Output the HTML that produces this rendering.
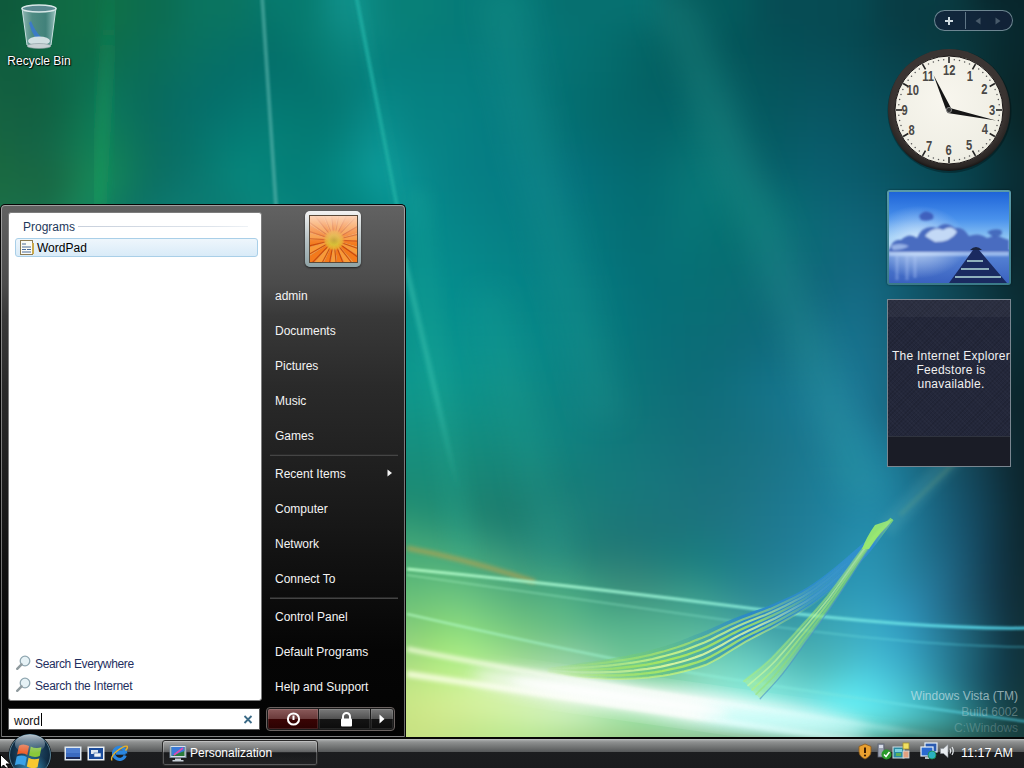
<!DOCTYPE html>
<html><head><meta charset="utf-8">
<style>
*{margin:0;padding:0;box-sizing:border-box}
html,body{width:1024px;height:768px;overflow:hidden;background:#0b6f6a;font-family:"Liberation Sans",sans-serif}
.abs{position:absolute}
#wallwrap{position:absolute;left:0;top:0;width:1024px;height:768px;overflow:hidden}
</style></head><body>
<div id="wallwrap"><div id="field" style="position:absolute;left:-48px;top:-48px;width:1120px;filter:blur(14px)"><div style="height:12px;background:linear-gradient(90deg,#0e5a3c 0px,#0e5a3c 24px,#0e5a3c 48px,#0e5a3c 72px,#106a44 96px,#106a44 120px,#0f7048 144px,#0f7048 168px,#0c6c50 192px,#0c6c50 216px,#0a7460 240px,#0a7460 264px,#0a7460 288px,#067a6e 312px,#067a6e 336px,#067a6e 360px,#10908a 384px,#10908a 408px,#088078 432px,#088078 456px,#088078 480px,#067a78 504px,#067a78 528px,#067a78 552px,#067a78 576px,#067070 600px,#067070 624px,#067070 648px,#067070 672px,#067070 696px,#045a5c 720px,#045a5c 744px,#045a5c 768px,#045a5c 792px,#064c54 816px,#064c54 840px,#064c54 864px,#064a52 888px,#064a52 912px,#083c44 936px,#083c44 960px,#083c44 984px,#0a3a40 1008px,#08262c 1032px,#08262c 1056px,#08262c 1080px,#08262c 1104px)"></div><div style="height:12px;background:linear-gradient(90deg,#0e5a3c 0px,#0e5a3c 24px,#0e5a3c 48px,#0e5a3c 72px,#106a44 96px,#106a44 120px,#0f7048 144px,#0f7048 168px,#0c6c50 192px,#0c6c50 216px,#0a7460 240px,#0a7460 264px,#0a7460 288px,#067a6e 312px,#067a6e 336px,#067a6e 360px,#10908a 384px,#10908a 408px,#088078 432px,#088078 456px,#088078 480px,#067a78 504px,#067a78 528px,#067a78 552px,#067a78 576px,#067070 600px,#067070 624px,#067070 648px,#067070 672px,#067070 696px,#045a5c 720px,#045a5c 744px,#045a5c 768px,#045a5c 792px,#064c54 816px,#064c54 840px,#064c54 864px,#064a52 888px,#064a52 912px,#083c44 936px,#083c44 960px,#083c44 984px,#0a3a40 1008px,#08262c 1032px,#08262c 1056px,#08262c 1080px,#08262c 1104px)"></div><div style="height:12px;background:linear-gradient(90deg,#0e5a3c 0px,#0e5a3c 24px,#0e5a3c 48px,#0e5a3c 72px,#106a44 96px,#106a44 120px,#0f7048 144px,#0f7048 168px,#0c6c50 192px,#0c6c50 216px,#0a7460 240px,#0a7460 264px,#0a7460 288px,#067a6e 312px,#067a6e 336px,#067a6e 360px,#10908a 384px,#10908a 408px,#088078 432px,#088078 456px,#088078 480px,#067a78 504px,#067a78 528px,#067a78 552px,#067a78 576px,#067070 600px,#067070 624px,#067070 648px,#067070 672px,#067070 696px,#045a5c 720px,#045a5c 744px,#045a5c 768px,#045a5c 792px,#064c54 816px,#064c54 840px,#064c54 864px,#064a52 888px,#064a52 912px,#083c44 936px,#083c44 960px,#083c44 984px,#0a3a40 1008px,#08262c 1032px,#08262c 1056px,#08262c 1080px,#08262c 1104px)"></div><div style="height:12px;background:linear-gradient(90deg,#0e5a3c 0px,#0e5a3c 24px,#0e5a3c 48px,#0e5a3c 72px,#106a44 96px,#106a44 120px,#0f7048 144px,#0f7048 168px,#0c6c50 192px,#0c6c50 216px,#0a7460 240px,#0a7460 264px,#0a7460 288px,#067a6e 312px,#067a6e 336px,#067a6e 360px,#10908a 384px,#10908a 408px,#088078 432px,#088078 456px,#088078 480px,#067a78 504px,#067a78 528px,#067a78 552px,#067a78 576px,#067070 600px,#067070 624px,#067070 648px,#067070 672px,#067070 696px,#045a5c 720px,#045a5c 744px,#045a5c 768px,#045a5c 792px,#064c54 816px,#064c54 840px,#064c54 864px,#064a52 888px,#064a52 912px,#083c44 936px,#083c44 960px,#083c44 984px,#0a3a40 1008px,#08262c 1032px,#08262c 1056px,#08262c 1080px,#08262c 1104px)"></div><div style="height:12px;background:linear-gradient(90deg,#0e5a3c 0px,#0e5a3c 24px,#0e5a3c 48px,#0e5a3c 72px,#106a44 96px,#106a44 120px,#0f7048 144px,#0f7048 168px,#0c6c50 192px,#0c6c50 216px,#0a7460 240px,#0a7460 264px,#0a7460 288px,#067a6e 312px,#067a6e 336px,#067a6e 360px,#10908a 384px,#10908a 408px,#088078 432px,#088078 456px,#088078 480px,#067a78 504px,#067a78 528px,#067a78 552px,#067a78 576px,#067070 600px,#067070 624px,#067070 648px,#067070 672px,#067070 696px,#045a5c 720px,#045a5c 744px,#045a5c 768px,#045a5c 792px,#064c54 816px,#064c54 840px,#064c54 864px,#064a52 888px,#064a52 912px,#083c44 936px,#083c44 960px,#083c44 984px,#0a3a40 1008px,#08262c 1032px,#08262c 1056px,#08262c 1080px,#08262c 1104px)"></div><div style="height:12px;background:linear-gradient(90deg,#0e5a3c 0px,#0e5a3c 24px,#0e5a3c 48px,#0e5a3c 72px,#106a44 96px,#106a44 120px,#0f7048 144px,#0f7048 168px,#0c6c50 192px,#0c6c50 216px,#0a7460 240px,#0a7460 264px,#0a7460 288px,#046e6a 312px,#067a6e 336px,#067a6e 360px,#10908a 384px,#10908a 408px,#088078 432px,#088078 456px,#088078 480px,#067a78 504px,#067a78 528px,#067a78 552px,#067a7c 576px,#067070 600px,#067070 624px,#067070 648px,#067070 672px,#067070 696px,#045a5c 720px,#045a5c 744px,#045a5c 768px,#045a5c 792px,#064c54 816px,#064c54 840px,#064c54 864px,#064a52 888px,#064a52 912px,#083c44 936px,#083c44 960px,#0a3a40 984px,#0a3a40 1008px,#0a3a40 1032px,#08262c 1056px,#08262c 1080px,#08262c 1104px)"></div><div style="height:12px;background:linear-gradient(90deg,#0e5a3c 0px,#0e5a3c 24px,#0e5a3c 48px,#0f613f 72px,#106843 96px,#0f6c46 120px,#0f6e47 144px,#0e6f4b 168px,#0c6c50 192px,#0b6e56 216px,#0a725e 240px,#087262 264px,#077465 288px,#067569 312px,#05776c 336px,#077d72 360px,#0b867e 384px,#0f8e88 408px,#0a857e 432px,#077f78 456px,#067d78 480px,#067b78 504px,#067a78 528px,#067877 552px,#067675 576px,#067474 600px,#067272 624px,#056f6f 648px,#056a6b 672px,#056667 696px,#056163 720px,#055d60 744px,#05595d 768px,#055459 792px,#055056 816px,#054d55 840px,#064b54 864px,#064a52 888px,#06464e 912px,#073f48 936px,#083b43 960px,#08383f 984px,#08343a 1008px,#082f35 1032px,#08292f 1056px,#08262c 1080px,#08262c 1104px)"></div><div style="height:12px;background:linear-gradient(90deg,#0f5b3d 0px,#0f5b3d 24px,#0f5b3d 48px,#0f5f3f 72px,#106743 96px,#0e6b47 120px,#0e6d49 144px,#0d6f4e 168px,#0b6d53 192px,#0a6e58 216px,#097260 240px,#087163 264px,#067066 288px,#057069 312px,#04746c 336px,#067b71 360px,#0a847c 384px,#0c8984 408px,#08827d 432px,#067e7a 456px,#067c7a 480px,#067b7a 504px,#067a7a 528px,#06797a 552px,#067778 576px,#057475 600px,#057172 624px,#056e6f 648px,#05696a 672px,#046465 696px,#045f61 720px,#045a5c 744px,#04575a 768px,#045459 792px,#055157 816px,#054e56 840px,#064d56 864px,#064c54 888px,#064850 912px,#07414a 936px,#083e46 960px,#093c43 984px,#093a40 1008px,#093137 1032px,#08292e 1056px,#08262c 1080px,#08262c 1104px)"></div><div style="height:12px;background:linear-gradient(90deg,#105c3e 0px,#105c3e 24px,#105c3e 48px,#0f5e3e 72px,#106643 96px,#0e6b49 120px,#0d6d4a 144px,#0c7051 168px,#0b6c54 192px,#0a6e5a 216px,#097161 240px,#077065 264px,#056f67 288px,#046e69 312px,#04726c 336px,#05796f 360px,#09827a 384px,#0a8580 408px,#067f7c 432px,#067e7c 456px,#067d7c 480px,#067c7c 504px,#067b7c 528px,#05797b 552px,#057678 576px,#057375 600px,#057071 624px,#056e6e 648px,#04696a 672px,#046465 696px,#045f60 720px,#045c5e 744px,#04585c 768px,#04555a 792px,#055259 816px,#054f57 840px,#064f58 864px,#064d57 888px,#074953 912px,#08434c 936px,#084049 960px,#093e46 984px,#093b41 1008px,#093136 1032px,#08282d 1056px,#08262c 1080px,#08262c 1104px)"></div><div style="height:12px;background:linear-gradient(90deg,#115e3f 0px,#115e3f 24px,#115e3f 48px,#105d3e 72px,#106542 96px,#0d6a4a 120px,#0d6e4c 144px,#0c7054 168px,#0a6c56 192px,#096d5c 216px,#087063 240px,#066f66 264px,#056e69 288px,#04706b 312px,#04706b 336px,#04776e 360px,#087f79 384px,#07817c 408px,#06807e 432px,#067f7e 456px,#067e7e 480px,#067d7e 504px,#067c7d 528px,#057a7c 552px,#057577 576px,#057274 600px,#057071 624px,#056d6e 648px,#046869 672px,#046364 696px,#045e60 720px,#045e60 744px,#045a5d 768px,#05575c 792px,#05545a 816px,#065159 840px,#07505b 864px,#074f59 888px,#074b55 912px,#08454f 936px,#09424b 960px,#094048 984px,#093c43 1008px,#093034 1032px,#09282c 1056px,#08262c 1080px,#08262c 1104px)"></div><div style="height:12px;background:linear-gradient(90deg,#125f3f 0px,#125f3f 24px,#125f3f 48px,#105c3e 72px,#106342 96px,#0d6a4c 120px,#0d724f 144px,#0b7157 168px,#0a6b57 192px,#096d5e 216px,#076f64 240px,#066f68 264px,#046f6a 288px,#04736e 312px,#04726d 336px,#04756e 360px,#077d77 384px,#057c79 408px,#068281 432px,#06807f 456px,#067f7f 480px,#067e7f 504px,#067d7f 528px,#057a7d 552px,#057578 576px,#057274 600px,#056f70 624px,#046c6d 648px,#046769 672px,#046264 696px,#045f62 720px,#056163 744px,#045b5f 768px,#05585d 792px,#05555c 816px,#06535b 840px,#07525d 864px,#07515b 888px,#074d58 912px,#084651 936px,#09444e 960px,#09424b 984px,#093d44 1008px,#093136 1032px,#09272b 1056px,#0a2426 1080px,#0a2426 1104px)"></div><div style="height:12px;background:linear-gradient(90deg,#136040 0px,#136040 24px,#136040 48px,#115e3f 72px,#106242 96px,#0d694c 120px,#0e7552 144px,#0b735a 168px,#0a6b58 192px,#086c60 216px,#076e66 240px,#056e69 264px,#05716c 288px,#047670 312px,#04746f 336px,#04736e 360px,#067b75 384px,#067e7b 408px,#078685 432px,#068180 456px,#068080 480px,#067f80 504px,#067d7f 528px,#057b7f 552px,#057679 576px,#047174 600px,#046e70 624px,#046b6d 648px,#046668 672px,#046265 696px,#046063 720px,#056365 744px,#045d61 768px,#05595f 792px,#05565d 816px,#06545d 840px,#07545f 864px,#07525e 888px,#074f5a 912px,#084854 936px,#094751 960px,#09434c 984px,#093d45 1008px,#093238 1032px,#09272a 1056px,#0a2426 1080px,#0a2426 1104px)"></div><div style="height:12px;background:linear-gradient(90deg,#146141 0px,#146141 24px,#146141 48px,#125f40 72px,#106142 96px,#0d694b 120px,#0e7955 144px,#0b755d 168px,#0a6a59 192px,#076c62 216px,#066d67 240px,#05706b 264px,#05746e 288px,#047872 312px,#047771 336px,#04756f 360px,#047772 384px,#06817e 408px,#098a89 432px,#068282 456px,#068182 480px,#068081 504px,#067d80 528px,#067b80 552px,#05777a 576px,#047275 600px,#046d6f 624px,#046b6c 648px,#046668 672px,#046366 696px,#046165 720px,#056667 744px,#056064 768px,#055a60 792px,#05575e 816px,#06565f 840px,#085562 864px,#075460 888px,#08505c 912px,#094b57 936px,#094954 960px,#09444e 984px,#093e47 1008px,#09343a 1032px,#092729 1056px,#0a2426 1080px,#0a2426 1104px)"></div><div style="height:12px;background:linear-gradient(90deg,#156341 0px,#156341 24px,#156341 48px,#136041 72px,#116243 96px,#0e6d4b 120px,#0f7c56 144px,#0b755e 168px,#0a6b5a 192px,#086c63 216px,#066e68 240px,#05726d 264px,#057771 288px,#057b74 312px,#047972 336px,#047871 360px,#057974 384px,#078481 408px,#0a8d8c 432px,#068383 456px,#068283 480px,#078183 504px,#067d81 528px,#067c80 552px,#05777c 576px,#057376 600px,#046e70 624px,#046a6c 648px,#046769 672px,#046468 696px,#046367 720px,#06696a 744px,#066466 768px,#055b61 792px,#055860 816px,#075761 840px,#085764 864px,#085562 888px,#08525f 912px,#094d59 936px,#094b56 960px,#09454f 984px,#093f48 1008px,#09363c 1032px,#09282b 1056px,#0a2426 1080px,#0a2426 1104px)"></div><div style="height:12px;background:linear-gradient(90deg,#166441 0px,#166441 24px,#166441 48px,#146143 72px,#126344 96px,#10704d 120px,#0f7e57 144px,#0d785b 168px,#0b6d5b 192px,#096d63 216px,#067068 240px,#067570 264px,#057973 288px,#057d76 312px,#047c74 336px,#047a73 360px,#047c77 384px,#088784 408px,#0b9190 432px,#078484 456px,#078384 480px,#078184 504px,#067d81 528px,#067c81 552px,#05787d 576px,#057377 600px,#046e72 624px,#046a6d 648px,#04686b 672px,#046569 696px,#046669 720px,#066b6c 744px,#066769 768px,#055d63 792px,#055a61 816px,#075963 840px,#085966 864px,#085764 888px,#085461 912px,#094f5c 936px,#094c58 960px,#094651 984px,#08404a 1008px,#08373e 1032px,#092a2e 1056px,#0a2426 1080px,#0a2426 1104px)"></div><div style="height:12px;background:linear-gradient(90deg,#176541 0px,#176541 24px,#176541 48px,#156344 72px,#136446 96px,#11724e 120px,#107f57 144px,#0f7b5a 168px,#0b6e5c 192px,#096d64 216px,#067168 240px,#067972 264px,#057c75 288px,#058077 312px,#057e76 336px,#047872 360px,#047f79 384px,#098a88 408px,#0c9594 432px,#078586 456px,#078485 480px,#068184 504px,#067d82 528px,#067c82 552px,#05787e 576px,#057478 600px,#046f73 624px,#046b6f 648px,#04686c 672px,#04666b 696px,#05696c 720px,#076e6e 744px,#076b6c 768px,#055e64 792px,#055b63 816px,#075b66 840px,#095b69 864px,#085866 888px,#085663 912px,#09515f 936px,#094d59 960px,#094752 984px,#08414b 1008px,#083940 1032px,#092b30 1056px,#0a2426 1080px,#0a2426 1104px)"></div><div style="height:12px;background:linear-gradient(90deg,#186740 0px,#186740 24px,#186740 48px,#166444 72px,#146647 96px,#137550 120px,#128358 144px,#107d5a 168px,#0c6f5c 192px,#0a6e64 216px,#077268 240px,#067a72 264px,#057f77 288px,#058279 312px,#057f77 336px,#047b75 360px,#04827c 384px,#0a8d8b 408px,#0d9898 432px,#088889 456px,#078587 480px,#068185 504px,#067d82 528px,#067d83 552px,#05797f 576px,#05747a 600px,#056f77 624px,#046c72 648px,#04696e 672px,#04676c 696px,#056b6e 720px,#077171 744px,#086e6f 768px,#066167 792px,#065c64 816px,#075c68 840px,#095c6b 864px,#095a69 888px,#095766 912px,#095361 936px,#094e5a 960px,#094853 984px,#08424c 1008px,#083a42 1032px,#092d32 1056px,#0a2a30 1080px,#0a2a30 1104px)"></div><div style="height:12px;background:linear-gradient(90deg,#196840 0px,#196840 24px,#196840 48px,#176543 72px,#166848 96px,#16754f 120px,#148658 144px,#117f59 168px,#0c705d 192px,#0b6e65 216px,#08736a 240px,#077c72 264px,#06837a 288px,#05847b 312px,#047e77 336px,#047e78 360px,#04857f 384px,#09908d 408px,#0e9c9b 432px,#098c8d 456px,#078588 480px,#068185 504px,#067d83 528px,#067d84 552px,#057a80 576px,#05757d 600px,#057079 624px,#046d75 648px,#046a70 672px,#04686e 696px,#066e70 720px,#087373 744px,#087172 768px,#06646a 792px,#065e66 816px,#075e6a 840px,#095e6d 864px,#095b6b 888px,#095968 912px,#095463 936px,#094f5c 960px,#084955 984px,#08434e 1008px,#083c44 1032px,#092e35 1056px,#0a2a30 1080px,#0a2a30 1104px)"></div><div style="height:12px;background:linear-gradient(90deg,#196940 0px,#196940 24px,#196940 48px,#196943 72px,#186541 96px,#19734b 120px,#168b59 144px,#12825a 168px,#0d725e 192px,#0b6f65 216px,#0a756d 240px,#097e75 264px,#07877d 288px,#05857c 312px,#047c76 336px,#04817b 360px,#048882 384px,#099390 408px,#0f9f9f 432px,#0a8f91 456px,#078588 480px,#068186 504px,#067d83 528px,#067d85 552px,#057a83 576px,#057580 600px,#05717c 624px,#046e77 648px,#046b72 672px,#046b70 696px,#067073 720px,#087676 744px,#097575 768px,#07686d 792px,#065f68 816px,#085f6c 840px,#095f6f 864px,#095d6d 888px,#095a6a 912px,#095564 936px,#094f5d 960px,#084a56 984px,#08444f 1008px,#083d47 1032px,#093037 1056px,#0a2a30 1080px,#0a2a30 1104px)"></div><div style="height:12px;background:linear-gradient(90deg,#1a6b42 0px,#1a6b42 24px,#1a6b42 48px,#196b46 72px,#186642 96px,#19774e 120px,#168f5c 144px,#127f5b 168px,#0c6f61 192px,#0c7168 216px,#0a7870 240px,#0a7b73 264px,#08857b 288px,#06847c 312px,#047f79 336px,#04807b 360px,#048681 384px,#068e8a 408px,#0c9a99 432px,#0a9192 456px,#078689 480px,#068286 504px,#067f84 528px,#067d84 552px,#067b84 576px,#067681 600px,#05737d 624px,#057078 648px,#046d73 672px,#046c71 696px,#067174 720px,#087676 744px,#087776 768px,#076b6e 792px,#06656c 816px,#08656f 840px,#0a6271 864px,#0b5f70 888px,#0b5c6d 912px,#0a5767 936px,#0a5160 960px,#094c59 984px,#094652 1008px,#083b45 1032px,#092e36 1056px,#0a2a30 1080px,#0a2a30 1104px)"></div><div style="height:12px;background:linear-gradient(90deg,#1a6d44 0px,#1a6d44 24px,#1a6d44 48px,#196c48 72px,#186845 96px,#197b53 120px,#158b5d 144px,#107b5e 168px,#0d7164 192px,#0c766c 216px,#0b7a70 240px,#0a7b72 264px,#098178 288px,#08887f 312px,#06827b 336px,#047d7a 360px,#04837f 384px,#048a85 408px,#099493 432px,#0a9292 456px,#06878a 480px,#068387 504px,#068085 528px,#057d83 552px,#067d84 576px,#067881 600px,#05747d 624px,#057178 648px,#046e74 672px,#046c72 696px,#067174 720px,#087777 744px,#087575 768px,#066f70 792px,#066a6f 816px,#086771 840px,#0a6472 864px,#0c6173 888px,#0c5e70 912px,#0c596a 936px,#0b5363 960px,#0b4e5c 984px,#0a4551 1008px,#093943 1032px,#0a2c34 1056px,#0a2a30 1080px,#0a2a30 1104px)"></div><div style="height:12px;background:linear-gradient(90deg,#1a6e47 0px,#1a6e47 24px,#1a6e47 48px,#196e4a 72px,#186b48 96px,#198157 120px,#14875e 144px,#0f7760 168px,#0e7368 192px,#0c7a6f 216px,#0b7b71 240px,#0b7c73 264px,#0a7e76 288px,#09887e 312px,#07867e 336px,#057f7a 360px,#04817e 384px,#048784 408px,#068f8c 432px,#099393 456px,#06888a 480px,#068488 504px,#068186 528px,#067e84 552px,#067d83 576px,#067981 600px,#05757d 624px,#057278 648px,#046e75 672px,#046c72 696px,#067275 720px,#087777 744px,#077474 768px,#067070 792px,#076d71 816px,#096a72 840px,#0b6674 864px,#0d6376 888px,#0d6074 912px,#0d5b6e 936px,#0c5567 960px,#0c4e5d 984px,#0b424f 1008px,#0a3741 1032px,#0a2a32 1056px,#0a2a30 1080px,#0a2a30 1104px)"></div><div style="height:12px;background:linear-gradient(90deg,#1a704a 0px,#1a704a 24px,#1a704a 48px,#196f4c 72px,#186f4c 96px,#18865b 120px,#14835e 144px,#0e7363 168px,#0e776b 192px,#0d7c70 216px,#0c7d72 240px,#0b7e74 264px,#0b7f76 288px,#0a857c 312px,#088a81 336px,#06837d 360px,#05827e 384px,#058583 408px,#058a88 432px,#099394 456px,#06898b 480px,#068588 504px,#068286 528px,#067f84 552px,#067c82 576px,#067a82 600px,#05777e 624px,#057379 648px,#046f75 672px,#056d73 696px,#077275 720px,#087577 744px,#067273 768px,#066f70 792px,#086e72 816px,#0a6c74 840px,#0c6876 864px,#0e6577 888px,#0f6277 912px,#0e5d71 936px,#0e576a 960px,#0d4b5b 984px,#0c404d 1008px,#0b343f 1032px,#0a2830 1056px,#0c2028 1080px,#0c2028 1104px)"></div><div style="height:12px;background:linear-gradient(90deg,#1a724c 0px,#1a724c 24px,#1a724c 48px,#19714e 72px,#197451 96px,#178c60 120px,#137f60 144px,#0f7667 168px,#0e7b6e 192px,#0d7d71 216px,#0d7e73 240px,#0c7f75 264px,#0b8077 288px,#0b8279 312px,#098b81 336px,#078780 360px,#06837f 384px,#058683 408px,#058887 432px,#068f8f 456px,#068a8b 480px,#068789 504px,#068387 528px,#068185 552px,#067e83 576px,#067b82 600px,#05787e 624px,#05747a 648px,#057076 672px,#056d73 696px,#077276 720px,#077476 744px,#067072 768px,#076f71 792px,#096d73 816px,#0a6c75 840px,#0c6a77 864px,#0e6779 888px,#10647a 912px,#0f5f74 936px,#0f5467 960px,#0e4959 984px,#0d3d4b 1008px,#0c323d 1032px,#0b262e 1056px,#09292f 1080px,#09292f 1104px)"></div><div style="height:12px;background:linear-gradient(90deg,#1a744f 0px,#1a744f 24px,#1a744f 48px,#197250 72px,#197955 96px,#168b62 120px,#127b63 144px,#10786a 168px,#0e7d70 192px,#0e7f72 216px,#0d8074 240px,#0c8176 264px,#0c8278 288px,#0b837a 312px,#0a887f 336px,#098b82 360px,#06847f 384px,#068783 408px,#068987 432px,#058c8b 456px,#068b8c 480px,#06888a 504px,#068588 528px,#068286 552px,#067f84 576px,#067c82 600px,#05797f 624px,#05747b 648px,#057077 672px,#056d74 696px,#077377 720px,#067275 744px,#066f72 768px,#086e72 792px,#096d74 816px,#0b6b76 840px,#0d6978 864px,#0f687a 888px,#11667d 912px,#105e74 936px,#0f5265 960px,#0e4657 984px,#0d3b49 1008px,#0c2f3b 1032px,#0b242c 1056px,#09292f 1080px,#09292f 1104px)"></div><div style="height:12px;background:linear-gradient(90deg,#1a7551 0px,#1a7551 24px,#1a7551 48px,#197453 72px,#197d5a 96px,#168862 120px,#117866 144px,#107c6e 168px,#0f7f71 192px,#0e8073 216px,#0e8175 240px,#0d8277 264px,#0c8379 288px,#0c847a 312px,#0b857c 336px,#0a8e84 360px,#088881 384px,#078883 408px,#078b87 432px,#068d8c 456px,#068c8d 480px,#06898b 504px,#068689 528px,#068387 552px,#068085 576px,#067d83 600px,#057980 624px,#05757c 648px,#057178 672px,#056e75 696px,#077377 720px,#067074 744px,#076f73 768px,#086e73 792px,#0a6c75 816px,#0c6b77 840px,#0e6979 864px,#10677b 888px,#12667e 912px,#115f75 936px,#105467 960px,#0f4858 984px,#0e3c4a 1008px,#0d313c 1032px,#0c252e 1056px,#09292f 1080px,#09292f 1104px)"></div><div style="height:12px;background:linear-gradient(90deg,#1a7754 0px,#1a7754 24px,#1a7754 48px,#197555 72px,#19825e 96px,#158463 120px,#117a69 144px,#107f70 168px,#108072 192px,#0f8174 216px,#0e8276 240px,#0e8377 264px,#0d8579 288px,#0c867b 312px,#0c877d 336px,#0b8b82 360px,#098c84 384px,#088983 408px,#078c87 432px,#078e8c 456px,#058e8e 480px,#068a8b 504px,#068789 528px,#068487 552px,#068185 576px,#067e83 600px,#067a80 624px,#05767d 648px,#057279 672px,#056e75 696px,#067277 720px,#066f74 744px,#086e73 768px,#096d73 792px,#0b6c76 816px,#0d6a78 840px,#0f687a 864px,#11677c 888px,#136881 912px,#116076 936px,#105669 960px,#0e4b5c 984px,#0d404d 1008px,#0c343f 1032px,#0b2931 1056px,#0a292f 1080px,#0a292f 1104px)"></div><div style="height:12px;background:linear-gradient(90deg,#1a7956 0px,#1a7956 24px,#1a7956 48px,#197757 72px,#188862 96px,#148066 120px,#127d6d 144px,#118171 168px,#108273 192px,#0f8375 216px,#0f8476 240px,#0e8578 264px,#0e867a 288px,#0d877c 312px,#0c887e 336px,#0c8980 360px,#0a9087 384px,#088a83 408px,#088d88 432px,#088f8c 456px,#068f8e 480px,#068b8c 504px,#06888a 528px,#068588 552px,#068286 576px,#078084 600px,#067b80 624px,#06777d 648px,#05727a 672px,#056e76 696px,#067076 720px,#076f74 744px,#086e73 768px,#0a6d74 792px,#0c6b76 816px,#0e6979 840px,#10687b 864px,#12687e 888px,#146a83 912px,#126178 936px,#11576b 960px,#0f4d5d 984px,#0d4350 1008px,#0c3842 1032px,#0b2c34 1056px,#0a292f 1080px,#0a292f 1104px)"></div><div style="height:12px;background:linear-gradient(90deg,#1a7a59 0px,#1a7a59 24px,#1a7a59 48px,#197859 72px,#178c66 96px,#137c68 120px,#128170 144px,#118272 168px,#118373 192px,#108475 216px,#0f8577 240px,#0f8679 264px,#0e877b 288px,#0d887d 312px,#0d897f 336px,#0c8b81 360px,#0b8f85 384px,#0a8e86 408px,#098e88 432px,#08908c 456px,#07908e 480px,#068c8d 504px,#06898b 528px,#068688 552px,#078486 576px,#078184 600px,#077c81 624px,#06787e 648px,#06737a 672px,#056f77 696px,#066f76 720px,#076f75 744px,#096e74 768px,#0b6c75 792px,#0d6b77 816px,#0f697a 840px,#10687c 864px,#136a81 888px,#156c86 912px,#136279 936px,#11586c 960px,#104e5f 984px,#0e4452 1008px,#0c3a45 1032px,#0a3037 1056px,#0a282f 1080px,#0a282f 1104px)"></div><div style="height:12px;background:linear-gradient(90deg,#1a7c5b 0px,#1a7c5b 24px,#1a7c5b 48px,#197b5c 72px,#178867 96px,#147f6c 120px,#128370 144px,#128472 168px,#118574 192px,#118676 216px,#108778 240px,#0f887a 264px,#0f897c 288px,#0e8a7e 312px,#0d8b80 336px,#0d8c82 360px,#0c8d84 384px,#0b9288 408px,#098f88 432px,#09918c 456px,#08918e 480px,#068d8d 504px,#068a8b 528px,#078889 552px,#078587 576px,#088284 600px,#077d81 624px,#07797e 648px,#06747b 672px,#057078 696px,#076f76 720px,#086e75 744px,#0a6d74 768px,#0c6c76 792px,#0e6a78 816px,#0f687a 840px,#116a7f 864px,#146c84 888px,#166d88 912px,#14637b 936px,#12596e 960px,#104f61 984px,#0f4553 1008px,#0d3b46 1032px,#0b3139 1056px,#0a292f 1080px,#0a292f 1104px)"></div><div style="height:12px;background:linear-gradient(90deg,#1a7e5e 0px,#1a7e5e 24px,#1a7e5e 48px,#197f61 72px,#168468 96px,#14836f 120px,#138471 144px,#128573 168px,#128675 192px,#118777 216px,#118879 240px,#10897b 264px,#0f8a7d 288px,#0f8b7f 312px,#0e8c81 336px,#0d8d83 360px,#0d8e84 384px,#0c9288 408px,#0a9088 432px,#0a938c 456px,#08928e 480px,#078f8d 504px,#078c8c 528px,#078989 552px,#088687 576px,#088385 600px,#087e82 624px,#077a7e 648px,#06757b 672px,#067078 696px,#086f77 720px,#096e76 744px,#0b6d75 768px,#0d6b77 792px,#0e6a79 816px,#106a7d 840px,#136c82 864px,#156e87 888px,#166f8a 912px,#15657d 936px,#135a6f 960px,#115062 984px,#0f4655 1008px,#0e3c48 1032px,#0b3038 1056px,#0a282e 1080px,#0a282e 1104px)"></div><div style="height:12px;background:linear-gradient(90deg,#1a8061 0px,#1a8061 24px,#1a8061 48px,#198465 72px,#15816b 96px,#148470 120px,#148572 144px,#138674 168px,#128776 192px,#128978 216px,#118a7a 240px,#108b7c 264px,#108c7e 288px,#0f8d80 312px,#0f8e81 336px,#0e8f83 360px,#0d9085 384px,#0d9187 408px,#0b938a 432px,#0b948d 456px,#09938e 480px,#08908d 504px,#088d8c 528px,#088a8a 552px,#088788 576px,#098485 600px,#087f82 624px,#077a7f 648px,#07757b 672px,#077078 696px,#086e77 720px,#0a6d76 744px,#0c6c76 768px,#0d6b78 792px,#0f697a 816px,#116c7f 840px,#146e84 864px,#167089 888px,#17708b 912px,#15667e 936px,#145c71 960px,#125164 984px,#104757 1008px,#0e3c48 1032px,#0b2e37 1056px,#0a282e 1080px,#0a282e 1104px)"></div><div style="height:12px;background:linear-gradient(90deg,#1a8163 0px,#1a8163 24px,#1a8163 48px,#198969 72px,#16846e 96px,#158671 120px,#148773 144px,#148875 168px,#138977 192px,#128a79 216px,#128b7b 240px,#118c7d 264px,#108d7e 288px,#108e80 312px,#0f8f82 336px,#0f9084 360px,#0e9186 384px,#0d9288 408px,#0d958b 432px,#0b958d 456px,#0a948f 480px,#0a918d 504px,#098e8c 528px,#098b8a 552px,#098888 576px,#098586 600px,#098082 624px,#097b7e 648px,#08757b 672px,#097178 696px,#096e78 720px,#0b6d76 744px,#0c6c77 768px,#0e6a79 792px,#106b7d 816px,#126d82 840px,#157087 864px,#17728c 888px,#18718d 912px,#166780 936px,#145d73 960px,#135365 984px,#114858 1008px,#0e3b46 1032px,#0c2d35 1056px,#0a282e 1080px,#0a282e 1104px)"></div><div style="height:12px;background:linear-gradient(90deg,#1a8366 0px,#1a8366 24px,#1a8366 48px,#18886b 72px,#168670 96px,#158772 120px,#158874 144px,#148976 168px,#148a78 192px,#138b7a 216px,#128c7c 240px,#128d7d 264px,#118f7f 288px,#109081 312px,#109183 336px,#0f9285 360px,#0e9387 384px,#0e9489 408px,#0d958b 432px,#0c968d 456px,#0b958f 480px,#0b928d 504px,#0a8f8c 528px,#0a8c8a 552px,#0a8988 576px,#0a8586 600px,#0a8082 624px,#0a7b7e 648px,#09757a 672px,#0a7178 696px,#0a6e78 720px,#0c6d77 744px,#0d6b77 768px,#0f6b7b 792px,#116d80 816px,#136f85 840px,#16728a 864px,#18748f 888px,#19728e 912px,#176881 936px,#155e74 960px,#145467 984px,#114756 1008px,#0e3944 1032px,#0c2b33 1056px,#0a272d 1080px,#0a272d 1104px)"></div><div style="height:12px;background:linear-gradient(90deg,#1a8568 0px,#1a8568 24px,#1a8568 48px,#17856e 72px,#178871 96px,#168973 120px,#158a75 144px,#158b77 168px,#148c79 192px,#138d7a 216px,#138e7c 240px,#128f7e 264px,#129080 288px,#119182 312px,#109284 336px,#109386 360px,#0f9488 384px,#0e958a 408px,#0e968c 432px,#0d988e 456px,#0c978f 480px,#0c948d 504px,#0c908b 528px,#0b8d89 552px,#0b8987 576px,#0b8585 600px,#0b8082 624px,#0b7b7e 648px,#0a767a 672px,#0b7279 696px,#0b6f78 720px,#0c6c77 744px,#0e6b78 768px,#106d7d 792px,#126f82 816px,#157187 840px,#17738c 864px,#197691 888px,#1a7390 912px,#186983 936px,#165f76 960px,#145366 984px,#114554 1008px,#0e3742 1032px,#0c2a31 1056px,#0a272d 1080px,#0a272d 1104px)"></div><div style="height:12px;background:linear-gradient(90deg,#1a866b 0px,#1a866b 24px,#1a866b 48px,#188870 72px,#178972 96px,#178a74 120px,#168b76 144px,#158c77 168px,#158d79 192px,#148e7b 216px,#138f7d 240px,#13907f 264px,#129181 288px,#129283 312px,#119385 336px,#109587 360px,#109689 384px,#0f978b 408px,#0e988c 432px,#0e998e 456px,#0d988f 480px,#0d948c 504px,#0d908a 528px,#0d8c87 552px,#0c8885 576px,#0c8585 600px,#0c8081 624px,#0c7b7e 648px,#0b767a 672px,#0c7279 696px,#0d6f78 720px,#0d6c78 744px,#0f6d7b 768px,#116f80 792px,#137185 816px,#16738a 840px,#18758f 864px,#1a7794 888px,#1a7492 912px,#196a84 936px,#165f75 960px,#145164 984px,#114352 1008px,#0e3641 1032px,#0c282f 1056px,#0a262c 1080px,#0a262c 1104px)"></div><div style="height:12px;background:linear-gradient(90deg,#1a886d 0px,#1a886d 24px,#1a886d 48px,#188971 72px,#188a73 96px,#178b75 120px,#168d76 144px,#168e78 168px,#158f7a 192px,#15907c 216px,#14917e 240px,#139280 264px,#139281 288px,#129383 312px,#129485 336px,#119586 360px,#119588 384px,#109689 408px,#10978b 432px,#0f988c 456px,#0e978d 480px,#0e938a 504px,#0e9088 528px,#0e8c86 552px,#0d8884 576px,#0d8584 600px,#0d8081 624px,#0d7b7d 648px,#0d767a 672px,#0d7379 696px,#0e6f78 720px,#0e6c78 744px,#106e7c 768px,#127183 792px,#147388 816px,#17758d 840px,#197792 864px,#1b7997 888px,#1b7693 912px,#196b85 936px,#165d73 960px,#144f62 984px,#114250 1008px,#0e343f 1032px,#0c262d 1056px,#0a262c 1080px,#0a262c 1104px)"></div><div style="height:12px;background:linear-gradient(90deg,#1a8a70 0px,#1a8a70 24px,#1a8a70 48px,#198a71 72px,#198b72 96px,#188b74 120px,#188c75 144px,#178d77 168px,#168e78 192px,#168e7a 216px,#158f7b 240px,#15907d 264px,#14917f 288px,#149180 312px,#139282 336px,#139383 360px,#129485 384px,#129586 408px,#119588 432px,#109689 456px,#10958a 480px,#0f9389 504px,#0f8f86 528px,#0f8b84 552px,#0f8882 576px,#0e8482 600px,#0e8081 624px,#0e7b7d 648px,#0e767a 672px,#0e7379 696px,#0f7079 720px,#106d79 744px,#116e7c 768px,#137082 792px,#157388 816px,#18768f 840px,#1a7995 864px,#1c7b9a 888px,#1c7795 912px,#196983 936px,#175b71 960px,#144e60 984px,#11404e 1008px,#0f323d 1032px,#0c252b 1056px,#0b252b 1080px,#0b252b 1104px)"></div><div style="height:12px;background:linear-gradient(90deg,#208d70 0px,#208d70 24px,#208d70 48px,#1f8d70 72px,#1c8b70 96px,#1a8a71 120px,#198b72 144px,#188b74 168px,#188c75 192px,#178d77 216px,#178e78 240px,#168e7a 264px,#168f7c 288px,#15907d 312px,#15917f 336px,#149180 360px,#149282 384px,#139383 408px,#129485 432px,#129486 456px,#119487 480px,#119186 504px,#108f85 528px,#108b82 552px,#108781 576px,#0f8481 600px,#0f8080 624px,#0f7b7d 648px,#0f767a 672px,#0f7379 696px,#107079 720px,#116e79 744px,#126e7c 768px,#147081 792px,#167387 816px,#18768e 840px,#1b7994 864px,#1d7c9a 888px,#1c7795 912px,#1a6a84 936px,#175c72 960px,#144f61 984px,#124150 1008px,#0f343e 1032px,#0c252c 1056px,#0b252b 1080px,#0b252b 1104px)"></div><div style="height:12px;background:linear-gradient(90deg,#269071 0px,#269071 24px,#269071 48px,#259071 72px,#249071 96px,#218f71 120px,#1c8b70 144px,#1a8a71 168px,#198a72 192px,#198b74 216px,#188c76 240px,#188d77 264px,#178d79 288px,#178e7a 312px,#168f7c 336px,#16907d 360px,#15907f 384px,#149180 408px,#149282 432px,#139384 456px,#139284 480px,#129083 504px,#128d82 528px,#118b81 552px,#118780 576px,#108480 600px,#108080 624px,#107b7d 648px,#10777a 672px,#11747a 696px,#11717a 720px,#126e7a 744px,#136f7c 768px,#157081 792px,#177386 816px,#19768d 840px,#1b7993 864px,#1d7d9a 888px,#1d7c9b 912px,#1b6e89 936px,#186178 960px,#155367 984px,#134655 1008px,#103843 1032px,#0d272f 1056px,#0b242a 1080px,#0b242a 1104px)"></div><div style="height:12px;background:linear-gradient(90deg,#2c9371 0px,#2c9371 24px,#2c9371 48px,#2b9371 72px,#2a9471 96px,#299471 120px,#269271 144px,#228f72 168px,#1c8a70 192px,#1b8a71 216px,#1a8a73 240px,#198b74 264px,#198c76 288px,#188c77 312px,#188d79 336px,#178e7a 360px,#168f7c 384px,#168f7e 408px,#15907f 432px,#159181 456px,#149081 480px,#148e80 504px,#138c7f 528px,#13897e 552px,#12877f 576px,#11837f 600px,#11807f 624px,#117b7c 648px,#11777a 672px,#12747a 696px,#13727a 720px,#136f7a 744px,#156f7d 768px,#167181 792px,#187285 816px,#1a758c 840px,#1c7993 864px,#1d7e9b 888px,#1e80a0 912px,#1b738f 936px,#19657d 960px,#16586c 984px,#134a5a 1008px,#103946 1032px,#0d2831 1056px,#0b242a 1080px,#0b242a 1104px)"></div><div style="height:12px;background:linear-gradient(90deg,#329672 0px,#329672 24px,#329672 48px,#319672 72px,#309772 96px,#2e9772 120px,#2d9772 144px,#2a9572 168px,#279372 192px,#228f71 216px,#1c8a70 240px,#1b8b71 264px,#1a8b73 288px,#1a8b74 312px,#198b76 336px,#188c77 360px,#188d79 384px,#178e7b 408px,#178e7c 432px,#168f7e 456px,#168f7e 480px,#158c7d 504px,#158a7c 528px,#14877b 552px,#13857c 576px,#13837d 600px,#12807e 624px,#127b7c 648px,#12787b 672px,#13757b 696px,#14727b 720px,#15707b 744px,#16707d 768px,#177181 792px,#197385 816px,#1a768b 840px,#1c7a93 864px,#1d7e9b 888px,#1e83a2 912px,#1c7794 936px,#1a6a83 960px,#175c71 984px,#144c5d 1008px,#113b49 1032px,#0d2932 1056px,#0b2329 1080px,#0b2329 1104px)"></div><div style="height:12px;background:linear-gradient(90deg,#389972 0px,#389972 24px,#389972 48px,#379972 72px,#369a72 96px,#349a72 120px,#339a72 144px,#329a72 168px,#2f9872 192px,#2c9673 216px,#289473 240px,#228f71 264px,#1d8b70 288px,#1c8b71 312px,#1b8b73 336px,#1a8b75 360px,#198b76 384px,#198c78 408px,#188d79 432px,#188e7b 456px,#178d7b 480px,#178b7a 504px,#168879 528px,#168578 552px,#15837a 576px,#14817b 600px,#137f7c 624px,#137b7c 648px,#13787b 672px,#14767b 696px,#15737b 720px,#16707b 744px,#17707e 768px,#197282 792px,#1a7386 816px,#1b778c 840px,#1c7b93 864px,#1d7f9b 888px,#1e83a2 912px,#1d7c9a 936px,#1b6f88 960px,#175e74 984px,#144d60 1008px,#113c4d 1032px,#0d2a34 1056px,#0b2329 1080px,#0b2329 1104px)"></div><div style="height:12px;background:linear-gradient(90deg,#3e9c73 0px,#3e9c73 24px,#3e9c73 48px,#3d9d73 72px,#3c9d73 96px,#3a9d73 120px,#399d73 144px,#389d73 168px,#379d72 192px,#349c73 216px,#309973 240px,#2d9774 264px,#299473 288px,#228f71 312px,#1d8b70 336px,#1c8b71 360px,#1c8b73 384px,#1b8b75 408px,#1a8b76 432px,#198c78 456px,#198c79 480px,#188978 504px,#188677 528px,#178376 552px,#178177 576px,#167f78 600px,#157d79 624px,#147b7b 648px,#15797c 672px,#16767c 696px,#16747c 720px,#17717c 744px,#18717e 768px,#1a7282 792px,#1b7487 816px,#1c778e 840px,#1d7c95 864px,#1e809b 888px,#1f84a2 912px,#1e819f 936px,#1b708b 960px,#186077 984px,#154f64 1008px,#123e50 1032px,#0e2c36 1056px,#0b2228 1080px,#0b2228 1104px)"></div><div style="height:12px;background:linear-gradient(90deg,#449f74 0px,#449f74 24px,#449f74 48px,#43a073 72px,#41a073 96px,#40a073 120px,#3fa073 144px,#3ea073 168px,#3da073 192px,#3ba173 216px,#399f73 240px,#359d74 264px,#329a74 288px,#2e9875 312px,#299373 336px,#228e71 360px,#1e8b70 384px,#1d8b72 408px,#1c8b73 432px,#1b8b75 456px,#1b8b77 480px,#1a8775 504px,#198474 528px,#198173 552px,#187f74 576px,#177d76 600px,#177c78 624px,#167b7a 648px,#16797b 672px,#17777c 696px,#18747c 720px,#18727c 744px,#1a717e 768px,#1b7383 792px,#1c7589 816px,#1c788f 840px,#1d7d96 864px,#1e819d 888px,#1f85a4 912px,#1f83a2 936px,#1c728e 960px,#18617b 984px,#155067 1008px,#124053 1032px,#0e2d38 1056px,#0b2228 1080px,#0b2228 1104px)"></div><div style="height:12px;background:linear-gradient(90deg,#4aa374 0px,#4aa374 24px,#4aa374 48px,#49a374 72px,#47a374 96px,#46a374 120px,#45a374 144px,#44a374 168px,#43a474 192px,#41a474 216px,#40a473 240px,#3da274 264px,#3aa074 288px,#379e75 312px,#339b75 336px,#2f9875 360px,#299373 384px,#238e71 408px,#1e8b70 432px,#1e8b72 456px,#1e8c75 480px,#1c8673 504px,#1b8271 528px,#1b7f70 552px,#1a7d72 576px,#197c74 600px,#1a7f7a 624px,#187b79 648px,#18787a 672px,#18767b 696px,#19757d 720px,#1a727d 744px,#1b727f 768px,#1c7484 792px,#1c768a 816px,#1d7991 840px,#1e7d97 864px,#1f829e 888px,#2087a6 912px,#2084a4 936px,#1c7491 960px,#19637e 984px,#16526a 1008px,#124155 1032px,#0e2e39 1056px,#0c2228 1080px,#0c2228 1104px)"></div><div style="height:12px;background:linear-gradient(90deg,#50a675 0px,#50a675 24px,#50a675 48px,#4ea675 72px,#4da675 96px,#4ca674 120px,#4ba674 144px,#4aa674 168px,#48a774 192px,#47a774 216px,#46a774 240px,#45a774 264px,#42a674 288px,#3fa375 312px,#3ba175 336px,#389e75 360px,#349c76 384px,#2f9875 408px,#299373 432px,#238e71 456px,#218c73 480px,#228c76 504px,#1d806f 528px,#1c7d6e 552px,#1c7c71 576px,#1d7f76 600px,#1d807a 624px,#1a7b79 648px,#1a7779 672px,#1a767a 696px,#1b747b 720px,#1b727d 744px,#1c7280 768px,#1d7586 792px,#1d778c 816px,#1e7a92 840px,#1f7e99 864px,#2083a0 888px,#2289a8 912px,#2286a5 936px,#1d7593 960px,#196581 984px,#16546d 1008px,#134257 1032px,#0e2f3b 1056px,#0c2329 1080px,#0c2329 1104px)"></div><div style="height:12px;background:linear-gradient(90deg,#56a975 0px,#56a975 24px,#56a975 48px,#54a975 72px,#53a975 96px,#52a975 120px,#51a975 144px,#50aa75 168px,#4eaa75 192px,#4daa75 216px,#4caa75 240px,#4baa74 264px,#49aa74 288px,#47a975 312px,#43a675 336px,#40a476 360px,#3da276 384px,#399f76 408px,#359c76 432px,#2f9874 456px,#299274 480px,#268e76 504px,#238672 528px,#1e7c6d 552px,#1f7f72 576px,#208278 600px,#1e8079 624px,#1c7b78 648px,#1b7678 672px,#1c7579 696px,#1c737a 720px,#1b747d 744px,#1c7481 768px,#1d7687 792px,#1e788d 816px,#1f7b94 840px,#207f9a 864px,#2185a2 888px,#248cab 912px,#2388a7 936px,#1f7795 960px,#1b6682 984px,#175570 1008px,#134458 1032px,#0f2f3b 1056px,#0c242a 1080px,#0c242a 1104px)"></div><div style="height:12px;background:linear-gradient(90deg,#5cac76 0px,#5cac76 24px,#5cac76 48px,#5aac76 72px,#59ac76 96px,#58ac76 120px,#57ac76 144px,#55ad75 168px,#54ad75 192px,#53ad75 216px,#52ad75 240px,#51ad75 264px,#4fad75 288px,#4eae75 312px,#4cac75 336px,#48aa76 360px,#45a776 384px,#41a576 408px,#3ea377 432px,#3ba077 456px,#369c78 480px,#319678 504px,#2a8f78 528px,#258775 552px,#238274 576px,#24857a 600px,#208078 624px,#1e7b77 648px,#1d7676 672px,#1d7578 696px,#1c767b 720px,#1b777d 744px,#1c7782 768px,#1e7789 792px,#1f798f 816px,#207c95 840px,#21809c 864px,#2387a5 888px,#268fae 912px,#248aa9 936px,#207996 960px,#1c6884 984px,#185772 1008px,#134359 1032px,#0f2f3b 1056px,#0d252b 1080px,#0d252b 1104px)"></div><div style="height:12px;background:linear-gradient(90deg,#61af76 0px,#61af76 24px,#61af76 48px,#60af76 72px,#5faf76 96px,#5eaf76 120px,#5daf76 144px,#5bb076 168px,#5ab076 192px,#59b076 216px,#58b076 240px,#57b076 264px,#55b176 288px,#54b175 312px,#53b175 336px,#50af76 360px,#4dad76 384px,#4aab76 408px,#46a877 432px,#43a677 456px,#42a579 480px,#3d9f79 504px,#369879 528px,#2f9079 552px,#288879 576px,#258579 600px,#228077 624px,#207b76 648px,#217876 672px,#1c7879 696px,#1b797c 720px,#1a7a7e 744px,#1c7a84 768px,#1e7a8a 792px,#207a90 816px,#217d96 840px,#22829e 864px,#258aa7 888px,#2791b1 912px,#268baa 936px,#227a98 960px,#1d6a86 984px,#1a5a77 1008px,#134359 1032px,#0f2e3b 1056px,#0d262c 1080px,#0d262c 1104px)"></div><div style="height:12px;background:linear-gradient(90deg,#67b277 0px,#67b277 24px,#67b277 48px,#66b277 72px,#65b277 96px,#64b277 120px,#62b377 144px,#61b377 168px,#60b376 192px,#5fb376 216px,#5eb376 240px,#5cb376 264px,#5bb476 288px,#5ab476 312px,#59b476 336px,#58b476 360px,#55b376 384px,#52b077 408px,#4eae77 432px,#4bac77 456px,#4eaf7b 480px,#49a97b 504px,#42a17b 528px,#3a9a7b 552px,#33917a 576px,#2d8c7b 600px,#288578 624px,#257e76 648px,#297e77 672px,#237d7a 696px,#1e7d7c 720px,#1a7d7f 744px,#1b7d85 768px,#1d7d8b 792px,#207d91 816px,#217e98 840px,#2485a1 864px,#268daa 888px,#2994b3 912px,#278dac 936px,#237c9a 960px,#1f6c8a 984px,#1b5b77 1008px,#144359 1032px,#0f2e3c 1056px,#0e282d 1080px,#0e282d 1104px)"></div><div style="height:12px;background:linear-gradient(90deg,#6db578 0px,#6db578 24px,#6db578 48px,#6cb577 72px,#6bb577 96px,#6ab577 120px,#68b677 144px,#67b677 168px,#66b677 192px,#65b677 216px,#64b677 240px,#62b677 264px,#61b777 288px,#60b777 312px,#5fb777 336px,#5eb776 360px,#5cb776 384px,#5ab677 408px,#56b477 432px,#53b177 456px,#57b57b 480px,#55b27c 504px,#4eab7c 528px,#46a37c 552px,#3d9a7b 576px,#3a997f 600px,#34927c 624px,#2d8779 648px,#308378 672px,#2c837a 696px,#26827d 720px,#238582 744px,#1f8187 768px,#21818d 792px,#238194 816px,#25829b 840px,#2688a4 864px,#288fad 888px,#2b97b6 912px,#298fae 936px,#257e9b 960px,#227292 984px,#1c5c77 1008px,#154459 1032px,#0f2e3c 1056px,#0e292e 1080px,#0e292e 1104px)"></div><div style="height:12px;background:linear-gradient(90deg,#73b878 0px,#73b878 24px,#73b878 48px,#72b878 72px,#71b878 96px,#70b878 120px,#6eb978 144px,#6db978 168px,#6cb978 192px,#6bb978 216px,#69b977 240px,#68ba77 264px,#67ba77 288px,#66ba77 312px,#65ba77 336px,#63ba77 360px,#62ba77 384px,#61bb77 408px,#5fb977 432px,#5bb777 456px,#61bc7c 480px,#61bc7e 504px,#59b47e 528px,#50ab7d 552px,#47a27c 576px,#46a682 600px,#409e80 624px,#35907c 648px,#378979 672px,#34897c 696px,#318c82 720px,#2d9087 744px,#28888b 768px,#258490 792px,#288496 816px,#28889e 840px,#298da7 864px,#2a92b0 888px,#2c9ab9 912px,#2a90af 936px,#2783a3 960px,#247496 984px,#1d5c78 1008px,#16445a 1032px,#102e3c 1056px,#0f2a2f 1080px,#0f2a2f 1104px)"></div><div style="height:12px;background:linear-gradient(90deg,#79bb79 0px,#79bb79 24px,#79bb79 48px,#78bb79 72px,#77bb79 96px,#75bc78 120px,#74bc78 144px,#73bc78 168px,#72bc78 192px,#71bc78 216px,#6fbc78 240px,#6ebd78 264px,#6dbd78 288px,#6cbd78 312px,#6bbd78 336px,#69bd78 360px,#68bd77 384px,#67be77 408px,#66be77 432px,#63bd77 456px,#6ac27c 480px,#6cc57f 504px,#63bc7f 528px,#5ab37e 552px,#51ab7d 576px,#50ae83 600px,#49a883 624px,#3d9a80 648px,#3f937d 672px,#3f9381 696px,#3b9786 720px,#37998b 744px,#32928f 768px,#2c8a93 792px,#2c8899 816px,#2c8da2 840px,#2d92aa 864px,#2d97b3 888px,#2e9cbc 912px,#2c94b5 936px,#2a88ac 960px,#257596 984px,#1e5d78 1008px,#17455a 1032px,#102d3c 1056px,#0f2c30 1080px,#0f2c30 1104px)"></div><div style="height:12px;background:linear-gradient(90deg,#7fbe79 0px,#7fbe79 24px,#7fbe79 48px,#7ebe79 72px,#7dbe79 96px,#7bbf79 120px,#7abf79 144px,#79bf79 168px,#78bf79 192px,#77bf79 216px,#75bf79 240px,#74c078 264px,#73c078 288px,#72c078 312px,#70c078 336px,#6fc078 360px,#6ec178 384px,#6dc178 408px,#6cc178 432px,#6ec278 456px,#74c87a 480px,#78cd7f 504px,#6ec47f 528px,#65bc7f 552px,#5cb37e 576px,#5ab784 600px,#53b387 624px,#46a483 648px,#47a083 672px,#479f86 696px,#45a18b 720px,#42a390 744px,#3c9b93 768px,#369397 792px,#308e9b 816px,#3193a4 840px,#3198ad 864px,#329db5 888px,#32a1be 912px,#2f99bd 936px,#2c8db4 960px,#267597 984px,#1f5e79 1008px,#17475b 1032px,#102f3d 1056px,#102d31 1080px,#102d31 1104px)"></div><div style="height:12px;background:linear-gradient(90deg,#85c17a 0px,#85c17a 24px,#85c17a 48px,#84c17a 72px,#82c17a 96px,#81c27a 120px,#80c279 144px,#7fc279 168px,#7ec279 192px,#7cc279 216px,#7bc379 240px,#7ac379 264px,#79c379 288px,#78c379 312px,#76c379 336px,#75c379 360px,#74c479 384px,#74c479 408px,#77c67a 432px,#7bc87a 456px,#7ece76 480px,#84d680 504px,#7acd80 528px,#6fc480 552px,#66bb7f 576px,#62bb83 600px,#58b586 624px,#4eae87 648px,#4fad89 672px,#4fac8c 696px,#4fab8f 720px,#4cac94 744px,#46a598 768px,#42a0a0 792px,#3998a1 816px,#3799a6 840px,#379eae 864px,#37a3b7 888px,#37a7c2 912px,#33a0c2 936px,#2e91b7 960px,#267a9a 984px,#1f637d 1008px,#184c5f 1032px,#10303f 1056px,#102e32 1080px,#102e32 1104px)"></div><div style="height:12px;background:linear-gradient(90deg,#8bc47a 0px,#8bc47a 24px,#8bc47a 48px,#8ac47a 72px,#88c57a 96px,#87c57a 120px,#86c57a 144px,#85c57a 168px,#84c57a 192px,#82c57a 216px,#81c67a 240px,#80c67a 264px,#7fc67a 288px,#7dc679 312px,#7cc679 336px,#7bc679 360px,#7dc87a 384px,#81c97b 408px,#84cb7c 432px,#87cd7c 456px,#88d373 480px,#90df80 504px,#86d680 528px,#7bcd7f 552px,#71c480 576px,#69be83 600px,#64ba8a 624px,#5bb68d 648px,#57b58e 672px,#57b691 696px,#57b795 720px,#56b699 744px,#52b2a1 768px,#4dada9 792px,#45a5aa 816px,#3c9fa7 840px,#3da4b0 864px,#3da9b9 888px,#3bacc5 912px,#37a7c8 936px,#3096bb 960px,#287f9e 984px,#206881 1008px,#195163 1032px,#103140 1056px,#113033 1080px,#113033 1104px)"></div><div style="height:12px;background:linear-gradient(90deg,#91c77b 0px,#91c77b 24px,#91c77b 48px,#8fc77b 72px,#8ec87b 96px,#8dc87b 120px,#8cc87b 144px,#8bc87b 168px,#89c87a 192px,#88c87a 216px,#87c97a 240px,#86c97a 264px,#85c97a 288px,#83c97a 312px,#83ca7a 336px,#87cb7b 360px,#8acd7c 384px,#8ecf7d 408px,#91d17e 432px,#94d27e 456px,#93db72 480px,#9de780 504px,#92df80 528px,#89d583 552px,#81cb87 576px,#7bc78e 600px,#76c394 624px,#6abe94 648px,#60bc90 672px,#60bc94 696px,#60bd98 720px,#63c1a3 744px,#5dbeaa 768px,#58bab2 792px,#50b2b3 816px,#42a6a9 840px,#42aab2 864px,#42afbc 888px,#3fb2c9 912px,#3baecd 936px,#329bbd 960px,#2a84a1 984px,#226d84 1008px,#1a5667 1032px,#0f3141 1056px,#113134 1080px,#113134 1104px)"></div><div style="height:12px;background:linear-gradient(90deg,#97ca7c 0px,#97ca7c 24px,#97ca7c 48px,#95ca7b 72px,#94cb7b 96px,#93cb7b 120px,#92cb7b 144px,#91cb7b 168px,#8fcb7b 192px,#8ecc7b 216px,#8dcc7b 240px,#8ccc7b 264px,#8bcc7b 288px,#8dcd7b 312px,#90cf7c 336px,#94d17d 360px,#97d27e 384px,#9ad47f 408px,#9ed680 432px,#a1d880 456px,#a4e37a 480px,#abef84 504px,#a3e688 528px,#9bdc8c 552px,#93d391 576px,#8ed098 600px,#89cc9f 624px,#78c69b 648px,#69c293 672px,#69c297 696px,#69c39b 720px,#71caae 744px,#68cbb3 768px,#64c7bb 792px,#5bbfbc 816px,#4cb1b0 840px,#48b0b3 864px,#46b4bf 888px,#43b7cc 912px,#3db3cf 936px,#34a0c0 960px,#2c89a5 984px,#226f85 1008px,#195466 1032px,#0f3242 1056px,#123235 1080px,#123235 1104px)"></div><div style="height:12px;background:linear-gradient(90deg,#9dcd7c 0px,#9dcd7c 24px,#9dcd7c 48px,#9bce7c 72px,#9ace7c 96px,#99ce7c 120px,#98ce7c 144px,#96ce7c 168px,#95ce7c 192px,#94cf7c 216px,#93cf7b 240px,#93cf7c 264px,#96d17d 288px,#99d37d 312px,#9dd47e 336px,#a0d67f 360px,#a4d880 384px,#a7d981 408px,#abdb82 432px,#aedd83 456px,#b4ec82 480px,#b7f08a 504px,#b5ec91 528px,#ace395 552px,#a5db9b 576px,#a0d9a3 600px,#9bd6aa 624px,#87cea1 648px,#72c896 672px,#72c99a 696px,#72ca9e 720px,#7ed2b7 744px,#76d5be 768px,#6fd4c4 792px,#67ccc6 816px,#57beb9 840px,#4db6b6 864px,#4bbec7 888px,#4ac7da 912px,#42bad3 936px,#38a7c4 960px,#2b87a3 984px,#226d84 1008px,#185264 1032px,#0f3343 1056px,#123436 1080px,#123436 1104px)"></div><div style="height:12px;background:linear-gradient(90deg,#a2d07d 0px,#a2d07d 24px,#a2d07d 48px,#a1d17d 72px,#a0d17d 96px,#9fd17c 120px,#9ed17c 144px,#9cd17c 168px,#9bd17c 192px,#9ad27c 216px,#9cd37d 240px,#9fd57e 264px,#a3d67f 288px,#a6d880 312px,#aada81 336px,#addb82 360px,#b1dd83 384px,#b4df83 408px,#b7e184 432px,#bbe285 456px,#beec86 480px,#c2f08f 504px,#c6f39b 528px,#bee99f 552px,#b8e4a6 576px,#b2e2ae 600px,#addfb5 624px,#95d6a8 648px,#7bce99 672px,#7bcf9d 696px,#7ed2a6 720px,#8adac0 744px,#84dec8 768px,#7ae0cd 792px,#72d9cf 816px,#63cbc3 840px,#57c5c3 864px,#53ced5 888px,#51d6e7 912px,#47c2d8 936px,#3eb0c7 960px,#2f90a7 984px,#216b82 1008px,#185063 1032px,#0f3442 1056px,#133537 1080px,#133537 1104px)"></div><div style="height:12px;background:linear-gradient(90deg,#a8d47d 0px,#a8d47d 24px,#a8d47d 48px,#a7d47d 72px,#a6d47d 96px,#a5d47d 120px,#a4d47d 144px,#a2d47d 168px,#a2d57d 192px,#a5d77e 216px,#a9d87f 240px,#acda80 264px,#b0dc81 288px,#b3dd82 312px,#b7df83 336px,#bae184 360px,#bde285 384px,#c1e486 408px,#c4e687 432px,#c8e888 456px,#c8ec8a 480px,#ccf094 504px,#d2f4a1 528px,#d0f0a8 552px,#caedb0 576px,#c5ebb8 600px,#c0e8bf 624px,#a3deaf 648px,#86d59e 672px,#84d5a0 696px,#8adaaf 720px,#96e2c8 744px,#92e7d3 768px,#88ead8 792px,#7ee5d8 816px,#73d7cf 840px,#67d5d4 864px,#5adee4 888px,#56ddeb 912px,#50cfdf 936px,#43b8c9 960px,#339cad 984px,#267688 1008px,#185163 1032px,#113742 1056px,#143638 1080px,#143638 1104px)"></div><div style="height:12px;background:linear-gradient(90deg,#aed77e 0px,#aed77e 24px,#aed77e 48px,#add77e 72px,#acd77e 96px,#abd77e 120px,#a9d77d 144px,#abd87e 168px,#afda7f 192px,#b2dc80 216px,#b6de81 240px,#b9df82 264px,#bce183 288px,#c0e384 312px,#c3e485 336px,#c6e585 360px,#c6e585 384px,#c7e585 408px,#c7e585 432px,#c8e686 456px,#d1ec8d 480px,#d7f09a 504px,#dcf4a6 528px,#def7b0 552px,#dcf6bb 576px,#d7f3c3 600px,#cff0c7 624px,#b2e6b6 648px,#95dda5 672px,#8ddba3 696px,#96e2b7 720px,#a2ead1 744px,#a0efdd 768px,#96f2e2 792px,#8ef2e4 816px,#84e3dc 840px,#77e6e5 864px,#68eff4 888px,#5eeaf2 912px,#59dbe6 936px,#49c1cc 960px,#38a6b2 984px,#2b828d 1008px,#1d5b67 1032px,#133a43 1056px,#143839 1080px,#143839 1104px)"></div><div style="height:12px;background:linear-gradient(90deg,#b4da7e 0px,#b4da7e 24px,#b4da7e 48px,#b3da7e 72px,#b2da7e 96px,#b1da7e 120px,#b5dc7f 144px,#b8de80 168px,#bcdf81 192px,#bfe182 216px,#c2e383 240px,#c4e383 264px,#c4e383 288px,#c5e383 312px,#c5e383 336px,#c6e383 360px,#c6e383 384px,#c7e383 408px,#c7e383 432px,#c8e484 456px,#d4ea8e 480px,#d2ec93 504px,#d1ef9b 528px,#d0f1a2 552px,#d4f3b0 576px,#d8f4bf 600px,#d4f4c6 624px,#c0eebd 648px,#a3e5ac 672px,#96e2a7 696px,#a2eac0 720px,#aef2d9 744px,#aef8e8 768px,#a6f9eb 792px,#9ef9ed 816px,#95f0e9 840px,#87f6f6 864px,#77f8f9 888px,#68f6fa 912px,#5ee3e9 936px,#4ec9ce 960px,#3eafb4 984px,#2f8d93 1008px,#22656b 1032px,#153d43 1056px,#15393a 1080px,#15393a 1104px)"></div><div style="height:12px;background:linear-gradient(90deg,#badd7f 0px,#badd7f 24px,#badd7f 48px,#b9dd7f 72px,#bbde7f 96px,#bee080 120px,#c1e181 144px,#c2e181 168px,#c2e181 192px,#c3e181 216px,#c3e181 240px,#c4e181 264px,#c4e181 288px,#c5e181 312px,#c5e181 336px,#c6e181 360px,#c6e181 384px,#c7e181 408px,#c7e181 432px,#c8e282 456px,#cce588 480px,#c8e78c 504px,#c5e98f 528px,#c4eb96 552px,#c6eda2 576px,#c3edaa 600px,#baecaa 624px,#b1ebaa 648px,#a8e9aa 672px,#a2eaaf 696px,#aef2c8 720px,#b1f6d7 744px,#b2fae3 768px,#b3fef0 792px,#aefef5 816px,#a5fef7 840px,#95fefa 864px,#85fbf9 888px,#75f4f3 912px,#65e9e9 936px,#54cfcf 960px,#44b4b4 984px,#349898 1008px,#266e6e 1032px,#194545 1056px,#153a3b 1080px,#153a3b 1104px)"></div><div style="height:12px;background:linear-gradient(90deg,#c0e080 0px,#c0e080 24px,#c0e080 48px,#c0e080 72px,#c0e080 96px,#c1e080 120px,#c1e080 144px,#c2e080 168px,#c2e080 192px,#c3e080 216px,#c3e080 240px,#c4e080 264px,#c4e080 288px,#c5e080 312px,#c5e080 336px,#c6e080 360px,#c6e080 384px,#c7e080 408px,#c7e080 432px,#c7e080 456px,#c4e183 480px,#c1e386 504px,#bde58a 528px,#bae68d 552px,#b5e58e 576px,#addd8a 600px,#a6d486 624px,#9ecc82 648px,#96c47e 672px,#8ebc7a 696px,#87b476 720px,#7fab72 744px,#77a36e 768px,#709b6a 792px,#689366 816px,#608b62 840px,#58825e 864px,#517a5a 888px,#497256 912px,#416a52 936px,#3a624e 960px,#325a4a 984px,#2a5146 1008px,#224942 1032px,#1b413e 1056px,#163c3c 1080px,#163c3c 1104px)"></div><div style="height:12px;background:linear-gradient(90deg,#c0e080 0px,#c0e080 24px,#c0e080 48px,#c0e080 72px,#c0e080 96px,#c1e080 120px,#c1e080 144px,#c2e080 168px,#c2e080 192px,#c3e080 216px,#c3e080 240px,#c4e080 264px,#c4e080 288px,#c5e080 312px,#c5e080 336px,#c6e080 360px,#c6e080 384px,#c7e080 408px,#c7e080 432px,#c7e080 456px,#c4e183 480px,#c1e386 504px,#bde58a 528px,#bae68d 552px,#b5e58e 576px,#addd8a 600px,#a6d486 624px,#9ecc82 648px,#96c47e 672px,#8ebc7a 696px,#87b476 720px,#7fab72 744px,#77a36e 768px,#709b6a 792px,#689366 816px,#608b62 840px,#58825e 864px,#517a5a 888px,#497256 912px,#416a52 936px,#3a624e 960px,#325a4a 984px,#2a5146 1008px,#224942 1032px,#1b413e 1056px,#163c3c 1080px,#163c3c 1104px)"></div><div style="height:12px;background:linear-gradient(90deg,#c0e080 0px,#c0e080 24px,#c0e080 48px,#c0e080 72px,#c0e080 96px,#c1e080 120px,#c1e080 144px,#c2e080 168px,#c2e080 192px,#c3e080 216px,#c3e080 240px,#c4e080 264px,#c4e080 288px,#c5e080 312px,#c5e080 336px,#c6e080 360px,#c6e080 384px,#c7e080 408px,#c7e080 432px,#c7e080 456px,#c4e183 480px,#c1e386 504px,#bde58a 528px,#bae68d 552px,#b5e58e 576px,#addd8a 600px,#a6d486 624px,#9ecc82 648px,#96c47e 672px,#8ebc7a 696px,#87b476 720px,#7fab72 744px,#77a36e 768px,#709b6a 792px,#689366 816px,#608b62 840px,#58825e 864px,#517a5a 888px,#497256 912px,#416a52 936px,#3a624e 960px,#325a4a 984px,#2a5146 1008px,#224942 1032px,#1b413e 1056px,#163c3c 1080px,#163c3c 1104px)"></div><div style="height:12px;background:linear-gradient(90deg,#c0e080 0px,#c0e080 24px,#c0e080 48px,#c0e080 72px,#c0e080 96px,#c1e080 120px,#c1e080 144px,#c2e080 168px,#c2e080 192px,#c3e080 216px,#c3e080 240px,#c4e080 264px,#c4e080 288px,#c5e080 312px,#c5e080 336px,#c6e080 360px,#c6e080 384px,#c7e080 408px,#c7e080 432px,#c7e080 456px,#c4e183 480px,#c1e386 504px,#bde58a 528px,#bae68d 552px,#b5e58e 576px,#addd8a 600px,#a6d486 624px,#9ecc82 648px,#96c47e 672px,#8ebc7a 696px,#87b476 720px,#7fab72 744px,#77a36e 768px,#709b6a 792px,#689366 816px,#608b62 840px,#58825e 864px,#517a5a 888px,#497256 912px,#416a52 936px,#3a624e 960px,#325a4a 984px,#2a5146 1008px,#224942 1032px,#1b413e 1056px,#163c3c 1080px,#163c3c 1104px)"></div><div style="height:12px;background:linear-gradient(90deg,#c0e080 0px,#c0e080 24px,#c0e080 48px,#c0e080 72px,#c0e080 96px,#c1e080 120px,#c1e080 144px,#c2e080 168px,#c2e080 192px,#c3e080 216px,#c3e080 240px,#c4e080 264px,#c4e080 288px,#c5e080 312px,#c5e080 336px,#c6e080 360px,#c6e080 384px,#c7e080 408px,#c7e080 432px,#c7e080 456px,#c4e183 480px,#c1e386 504px,#bde58a 528px,#bae68d 552px,#b5e58e 576px,#addd8a 600px,#a6d486 624px,#9ecc82 648px,#96c47e 672px,#8ebc7a 696px,#87b476 720px,#7fab72 744px,#77a36e 768px,#709b6a 792px,#689366 816px,#608b62 840px,#58825e 864px,#517a5a 888px,#497256 912px,#416a52 936px,#3a624e 960px,#325a4a 984px,#2a5146 1008px,#224942 1032px,#1b413e 1056px,#163c3c 1080px,#163c3c 1104px)"></div><div style="height:12px;background:linear-gradient(90deg,#c0e080 0px,#c0e080 24px,#c0e080 48px,#c0e080 72px,#c0e080 96px,#c1e080 120px,#c1e080 144px,#c2e080 168px,#c2e080 192px,#c3e080 216px,#c3e080 240px,#c4e080 264px,#c4e080 288px,#c5e080 312px,#c5e080 336px,#c6e080 360px,#c6e080 384px,#c7e080 408px,#c7e080 432px,#c7e080 456px,#c4e183 480px,#c1e386 504px,#bde58a 528px,#bae68d 552px,#b5e58e 576px,#addd8a 600px,#a6d486 624px,#9ecc82 648px,#96c47e 672px,#8ebc7a 696px,#87b476 720px,#7fab72 744px,#77a36e 768px,#709b6a 792px,#689366 816px,#608b62 840px,#58825e 864px,#517a5a 888px,#497256 912px,#416a52 936px,#3a624e 960px,#325a4a 984px,#2a5146 1008px,#224942 1032px,#1b413e 1056px,#163c3c 1080px,#163c3c 1104px)"></div><div style="height:12px;background:linear-gradient(90deg,#c0e080 0px,#c0e080 24px,#c0e080 48px,#c0e080 72px,#c0e080 96px,#c1e080 120px,#c1e080 144px,#c2e080 168px,#c2e080 192px,#c3e080 216px,#c3e080 240px,#c4e080 264px,#c4e080 288px,#c5e080 312px,#c5e080 336px,#c6e080 360px,#c6e080 384px,#c7e080 408px,#c7e080 432px,#c7e080 456px,#c4e183 480px,#c1e386 504px,#bde58a 528px,#bae68d 552px,#b5e58e 576px,#addd8a 600px,#a6d486 624px,#9ecc82 648px,#96c47e 672px,#8ebc7a 696px,#87b476 720px,#7fab72 744px,#77a36e 768px,#709b6a 792px,#689366 816px,#608b62 840px,#58825e 864px,#517a5a 888px,#497256 912px,#416a52 936px,#3a624e 960px,#325a4a 984px,#2a5146 1008px,#224942 1032px,#1b413e 1056px,#163c3c 1080px,#163c3c 1104px)"></div></div><svg class="abs" style="left:0;top:0" width="1024" height="768" viewBox="0 0 1024 768">
<defs>
 <filter id="fb05" x="-20%" y="-20%" width="140%" height="140%"><feGaussianBlur stdDeviation=".7"/></filter>
 <filter id="fb1" x="-20%" y="-20%" width="140%" height="140%"><feGaussianBlur stdDeviation="1"/></filter>
 <filter id="fb2" x="-20%" y="-20%" width="140%" height="140%"><feGaussianBlur stdDeviation="2"/></filter>
 <filter id="fb4" x="-30%" y="-30%" width="160%" height="160%"><feGaussianBlur stdDeviation="4"/></filter>
 <filter id="fb8" x="-30%" y="-30%" width="160%" height="160%"><feGaussianBlur stdDeviation="8"/></filter>
 <filter id="fb16" x="-50%" y="-50%" width="200%" height="200%"><feGaussianBlur stdDeviation="16"/></filter>
 <linearGradient id="cyl" x1="407" y1="0" x2="1024" y2="0" gradientUnits="userSpaceOnUse">
  <stop offset="0" stop-color="#b8ffc8"/><stop offset=".5" stop-color="#90f0d8"/><stop offset="1" stop-color="#50d8f0"/>
 </linearGradient>
 <linearGradient id="rib1" x1="892" y1="519" x2="540" y2="680" gradientUnits="userSpaceOnUse">
  <stop offset="0" stop-color="#80d860"/><stop offset=".07" stop-color="#3090d0"/><stop offset=".45" stop-color="#2a88c8"/><stop offset=".6" stop-color="#50b0a0"/><stop offset=".75" stop-color="#70c880"/><stop offset="1" stop-color="#a0e070"/>
 </linearGradient>
 <linearGradient id="rib2" x1="892" y1="519" x2="749" y2="688" gradientUnits="userSpaceOnUse">
  <stop offset="0" stop-color="#90e060"/><stop offset=".4" stop-color="#90e070"/><stop offset="1" stop-color="#b8f080"/>
 </linearGradient>
<linearGradient id="lnfade" x1="404" y1="258" x2="458" y2="490" gradientUnits="userSpaceOnUse"><stop offset="0" stop-color="#50d8c0" stop-opacity=".5"/><stop offset=".6" stop-color="#50d8c0" stop-opacity=".4"/><stop offset="1" stop-color="#50d8c0" stop-opacity="0"/></linearGradient>
<linearGradient id="wl1" x1="407" y1="0" x2="960" y2="0" gradientUnits="userSpaceOnUse"><stop offset="0" stop-color="#f8ffe0" stop-opacity=".9"/><stop offset=".6" stop-color="#ffffff" stop-opacity=".85"/><stop offset="1" stop-color="#e0fff8" stop-opacity="0"/></linearGradient>
<linearGradient id="gband" x1="0" y1="0" x2="0" y2="206" gradientUnits="userSpaceOnUse"><stop offset="0" stop-color="#1a9a5c" stop-opacity=".1"/><stop offset=".45" stop-color="#1a9a5c" stop-opacity=".35"/><stop offset="1" stop-color="#1a9a5c" stop-opacity=".55"/></linearGradient>
</defs>
<!-- soft bands -->
<path d="M478 -10Q520 200 590 420L625 420Q560 200 520 -10Z" fill="#30b0a0" opacity=".18" filter="url(#fb16)"/>
<path d="M648 -10Q740 220 850 500L885 500Q780 220 690 -10Z" fill="#40b8a8" opacity=".2" filter="url(#fb16)"/>
<path d="M406 190Q420 380 450 560L480 560Q445 380 430 190Z" fill="#30c0a0" opacity=".12" filter="url(#fb8)"/>
<path d="M404 258L458 490" stroke="url(#lnfade)" stroke-width="4" filter="url(#fb2)"/>
<path d="M485 290Q520 420 560 570" stroke="#30b8a0" stroke-width="28" fill="none" opacity=".18" filter="url(#fb16)"/>
<!-- top streaks -->
<path d="M111 -5Q104 100 98 206" stroke="url(#gband)" stroke-width="16" fill="none" filter="url(#fb4)"/>
<path d="M262 -5L276 206" stroke="#60b8b0" stroke-width="4" opacity=".55" filter="url(#fb1)"/>
<path d="M356 -5L397 206" stroke="#22b4a8" stroke-width="4" opacity=".7" filter="url(#fb1)"/>
<path d="M358 -5L399 206" stroke="#18a098" stroke-width="12" opacity=".18" filter="url(#fb4)"/>
<!-- orange streak -->
<path d="M407 548Q470 560 535 582" stroke="#e0a040" stroke-width="4" opacity=".6" fill="none" filter="url(#fb2)"/>
<!-- cyan lines -->
<path d="M407 569Q560 584 740 607T1030 628" stroke="url(#cyl)" stroke-width="3" fill="none" opacity=".85" filter="url(#fb1)"/>
<path d="M407 575Q560 597 740 622T1030 647" stroke="url(#cyl)" stroke-width="1.5" fill="none" opacity=".45" filter="url(#fb1)"/>
<path d="M407 614Q520 640 620 660T1030 722" stroke="url(#cyl)" stroke-width="2.5" fill="none" opacity=".6" filter="url(#fb1)"/>
<!-- white streak -->
<path d="M407 649Q520 672 720 703T960 738" stroke="url(#wl1)" stroke-width="4" fill="none" filter="url(#fb2)"/>
<path d="M407 674Q520 690 720 720T900 745" stroke="url(#wl1)" stroke-width="6" fill="none" filter="url(#fb2)"/>
<ellipse cx="670" cy="703" rx="200" ry="15" transform="rotate(8 670 703)" fill="#ffffff" opacity=".9" filter="url(#fb8)"/>
<ellipse cx="800" cy="724" rx="100" ry="10" transform="rotate(6 800 724)" fill="#90fff8" opacity=".45" filter="url(#fb8)"/>
<ellipse cx="620" cy="697" rx="110" ry="7" transform="rotate(8.5 620 697)" fill="#ffffff" opacity=".9" filter="url(#fb4)"/>
<!-- ribbon -->
<defs><linearGradient id="fadeL" x1="540" y1="0" x2="660" y2="0" gradientUnits="userSpaceOnUse"><stop offset="0" stop-color="#fff" stop-opacity="0"/><stop offset="1" stop-color="#fff" stop-opacity="1"/></linearGradient>
<mask id="mfade" maskUnits="userSpaceOnUse" x="0" y="0" width="1024" height="768"><rect x="0" y="0" width="1024" height="768" fill="url(#fadeL)"/></mask>
<linearGradient id="fadeLR" x1="540" y1="0" x2="860" y2="0" gradientUnits="userSpaceOnUse"><stop offset="0" stop-color="#fff" stop-opacity="0"/><stop offset=".4" stop-color="#fff" stop-opacity="1"/><stop offset=".68" stop-color="#fff" stop-opacity=".9"/><stop offset=".85" stop-color="#fff" stop-opacity=".15"/><stop offset="1" stop-color="#fff" stop-opacity="0"/></linearGradient>
<mask id="mfade2" maskUnits="userSpaceOnUse" x="0" y="0" width="1024" height="768"><rect x="0" y="0" width="1024" height="768" fill="url(#fadeLR)"/></mask></defs>
<g filter="url(#fb05)">
<g mask="url(#mfade)"><path d="M890.5 517.7 L885.2 522.7 L880.0 527.7 L874.9 532.6 L869.7 537.5 L864.0 542.5 L857.8 547.7 L851.1 553.6 L843.7 560.0 L835.9 566.4 L828.0 572.7 L820.4 578.5 L813.3 583.5 L806.7 587.7 L800.5 591.2 L794.4 594.4 L788.2 597.3 L782.0 600.1 L775.5 603.1 L769.0 605.7 L762.4 608.2 L755.6 610.6 L748.6 613.0 L741.6 615.5 L734.4 618.3 L727.2 621.3 L720.1 624.4 L713.2 627.5 L706.6 630.4 L700.2 633.0 L694.0 635.2 L688.0 637.8 L681.9 640.2 L675.8 642.5 L669.5 644.6 L663.3 646.5 L657.0 648.3 L650.8 650.1 L644.5 651.8 L638.2 653.3 L631.8 654.6 L625.4 655.9 L619.0 657.1 L612.5 658.3 L605.8 659.4 L599.1 660.4 L592.5 661.4 L586.0 662.2 L579.8 663.0 L574.1 664.0 L568.7 664.9 L563.5 665.7 L558.4 666.5 L553.3 667.2 L548.0 668.0 L548.0 672.0 L553.2 672.8 L558.3 673.7 L563.5 674.5 L568.7 675.4 L574.3 676.2 L580.2 677.0 L586.4 677.4 L593.0 677.9 L599.9 678.3 L606.9 678.7 L614.0 678.9 L621.0 678.9 L627.9 678.7 L634.8 678.4 L641.8 678.0 L648.8 677.4 L655.9 676.6 L663.0 675.7 L670.1 674.4 L677.1 672.9 L684.2 671.3 L691.4 669.4 L698.7 667.3 L706.0 664.8 L713.2 661.2 L720.1 657.3 L726.8 653.2 L733.2 649.2 L739.5 645.3 L745.6 641.7 L751.8 638.3 L758.2 635.0 L764.7 631.7 L771.3 628.3 L777.9 624.7 L784.5 620.9 L790.8 617.4 L796.9 613.8 L803.1 610.1 L809.5 606.1 L816.0 601.6 L822.7 596.5 L829.9 590.6 L837.5 584.0 L845.1 577.0 L852.6 569.8 L859.7 562.9 L866.2 556.3 L871.6 549.9 L876.4 543.7 L880.8 537.8 L885.0 532.0 L889.2 526.2 L893.5 520.3Z" fill="url(#rib1)" opacity=".95"/></g>
<g mask="url(#mfade2)"><path d="M890.5 517.7 L885.2 522.7 L880.0 527.7 L874.9 532.6 L869.7 537.5 L864.0 542.5 L857.8 547.7 L851.1 553.6 L843.7 560.0 L835.9 566.4 L828.0 572.7 L820.4 578.5 L813.3 583.5 L806.7 587.7 L800.5 591.2 L794.4 594.4 L788.2 597.3 L782.0 600.1 L775.5 603.1 L769.0 605.7 L762.4 608.2 L755.6 610.6 L748.6 613.0 L741.6 615.5 L734.4 618.3 L727.2 621.3 L720.1 624.4 L713.2 627.5 L706.6 630.4 L700.2 633.0 L694.0 635.2 L688.0 637.8 L681.9 640.2 L675.8 642.5 L669.5 644.6 L663.3 646.5 L657.0 648.3 L650.8 650.1 L644.5 651.8 L638.2 653.3 L631.8 654.6 L625.4 655.9 L619.0 657.1 L612.5 658.3 L605.8 659.4 L599.1 660.4 L592.5 661.4 L586.0 662.2 L579.8 663.0 L574.1 664.0 L568.7 664.9 L563.5 665.7 L558.4 666.5 L553.3 667.2 L548.0 668.0" stroke="#3a88c8" stroke-width="2" opacity="0.0" fill="none" stroke-linecap="round"/>
<path d="M891.0 518.1 L885.8 523.3 L880.9 528.4 L875.9 533.5 L870.8 538.6 L865.3 543.8 L859.2 549.1 L852.5 555.1 L845.2 561.6 L837.4 568.2 L829.6 574.6 L822.0 580.5 L814.9 585.7 L808.3 590.0 L802.0 593.7 L795.8 597.0 L789.7 600.0 L783.4 603.0 L777.0 606.0 L770.5 608.9 L763.8 611.5 L757.1 614.1 L750.2 616.7 L743.3 619.3 L736.3 622.2 L729.2 625.3 L722.3 628.6 L715.5 631.8 L708.8 634.9 L702.3 637.7 L696.0 640.1 L689.8 642.7 L683.5 645.1 L677.2 647.3 L670.8 649.3 L664.4 651.2 L658.0 652.9 L651.6 654.6 L645.2 656.0 L638.8 657.4 L632.3 658.6 L625.8 659.7 L619.3 660.7 L612.7 661.7 L606.0 662.6 L599.2 663.4 L592.6 664.1 L586.1 664.8 L579.9 665.3 L574.2 666.1 L568.7 666.7 L563.5 667.2 L558.4 667.7 L553.3 668.1 L548.0 668.7" stroke="#c0f060" stroke-width="2.2" opacity="0.6" fill="none" stroke-linecap="round"/>
<path d="M891.5 518.6 L886.5 523.9 L881.7 529.1 L876.9 534.3 L871.9 539.6 L866.6 545.0 L860.6 550.6 L854.0 556.7 L846.7 563.2 L839.0 569.9 L831.2 576.5 L823.6 582.5 L816.4 587.8 L809.8 592.3 L803.5 596.2 L797.3 599.6 L791.1 602.8 L784.9 605.9 L778.5 609.0 L772.0 612.0 L765.3 614.9 L758.6 617.6 L751.8 620.3 L745.0 623.1 L738.1 626.1 L731.3 629.3 L724.5 632.7 L717.7 636.1 L711.1 639.4 L704.5 642.4 L698.0 645.1 L691.6 647.6 L685.1 650.0 L678.6 652.1 L672.1 654.0 L665.5 655.8 L659.0 657.4 L652.5 659.0 L646.0 660.3 L639.4 661.5 L632.8 662.6 L626.2 663.5 L619.7 664.4 L613.0 665.2 L606.2 665.8 L599.4 666.4 L592.6 666.9 L586.1 667.3 L579.9 667.7 L574.2 668.1 L568.7 668.4 L563.5 668.7 L558.4 668.9 L553.2 669.1 L548.0 669.3" stroke="#d8fc88" stroke-width="2.2" opacity="0.8" fill="none" stroke-linecap="round"/>
<path d="M892.0 519.0 L887.2 524.4 L882.5 529.8 L877.9 535.2 L873.0 540.6 L867.8 546.2 L862.0 552.0 L855.4 558.2 L848.1 564.9 L840.5 571.7 L832.7 578.3 L825.1 584.5 L818.0 590.0 L811.3 594.6 L805.0 598.7 L798.8 602.2 L792.6 605.6 L786.4 608.8 L780.0 612.0 L773.4 615.2 L766.8 618.2 L760.1 621.1 L753.4 624.0 L746.7 626.9 L740.0 630.0 L733.3 633.3 L726.7 636.8 L720.0 640.4 L713.3 643.9 L706.7 647.1 L700.0 650.0 L693.3 652.5 L686.7 654.8 L680.0 656.9 L673.3 658.7 L666.7 660.4 L660.0 662.0 L653.3 663.4 L646.7 664.6 L640.0 665.6 L633.3 666.5 L626.7 667.3 L620.0 668.0 L613.2 668.6 L606.4 669.0 L599.5 669.4 L592.7 669.6 L586.2 669.8 L580.0 670.0 L574.2 670.1 L568.7 670.1 L563.5 670.1 L558.4 670.1 L553.2 670.0 L548.0 670.0" stroke="#b8f058" stroke-width="2.4" opacity="0.8" fill="none" stroke-linecap="round"/>
<path d="M892.5 519.4 L887.8 525.0 L883.3 530.5 L878.9 536.1 L874.2 541.7 L869.1 547.4 L863.4 553.4 L856.8 559.8 L849.6 566.5 L842.0 573.4 L834.3 580.2 L826.7 586.5 L819.6 592.2 L812.9 597.0 L806.5 601.2 L800.2 604.9 L794.0 608.3 L787.8 611.6 L781.5 615.0 L774.9 618.4 L768.3 621.6 L761.6 624.6 L755.0 627.7 L748.4 630.7 L741.9 633.9 L735.4 637.3 L728.9 640.9 L722.3 644.7 L715.6 648.3 L708.8 651.8 L702.0 654.9 L695.1 657.4 L688.2 659.7 L681.4 661.7 L674.6 663.5 L667.8 665.1 L661.0 666.6 L654.2 667.8 L647.4 668.9 L640.6 669.7 L633.8 670.5 L627.1 671.1 L620.3 671.6 L613.5 672.0 L606.6 672.2 L599.6 672.4 L592.8 672.4 L586.3 672.4 L580.1 672.3 L574.2 672.1 L568.7 671.9 L563.5 671.6 L558.4 671.3 L553.2 671.0 L548.0 670.7" stroke="#e8ffa0" stroke-width="2.2" opacity="0.85" fill="none" stroke-linecap="round"/>
<path d="M893.0 519.9 L888.5 525.6 L884.2 531.2 L879.8 536.9 L875.3 542.7 L870.3 548.7 L864.8 554.9 L858.3 561.3 L851.1 568.2 L843.6 575.2 L835.9 582.1 L828.3 588.6 L821.1 594.3 L814.4 599.3 L808.0 603.6 L801.7 607.5 L795.5 611.1 L789.3 614.5 L783.0 618.0 L776.4 621.5 L769.8 624.9 L763.2 628.2 L756.6 631.3 L750.1 634.5 L743.7 637.8 L737.4 641.3 L731.0 645.1 L724.5 648.9 L717.8 652.8 L711.0 656.5 L704.0 659.9 L696.9 662.4 L689.8 664.5 L682.8 666.5 L675.9 668.2 L668.9 669.7 L662.0 671.1 L655.1 672.2 L648.1 673.1 L641.2 673.9 L634.3 674.5 L627.5 674.9 L620.7 675.3 L613.8 675.4 L606.7 675.4 L599.8 675.3 L592.9 675.1 L586.4 674.9 L580.1 674.7 L574.3 674.2 L568.7 673.6 L563.5 673.1 L558.3 672.5 L553.2 671.9 L548.0 671.3" stroke="#b8f060" stroke-width="2.4" opacity="0.8" fill="none" stroke-linecap="round"/>
<path d="M893.5 520.3 L889.2 526.2 L885.0 532.0 L880.8 537.8 L876.4 543.7 L871.6 549.9 L866.2 556.3 L859.7 562.9 L852.6 569.8 L845.1 577.0 L837.5 584.0 L829.9 590.6 L822.7 596.5 L816.0 601.6 L809.5 606.1 L803.1 610.1 L796.9 613.8 L790.8 617.4 L784.5 620.9 L777.9 624.7 L771.3 628.3 L764.7 631.7 L758.2 635.0 L751.8 638.3 L745.6 641.7 L739.5 645.3 L733.2 649.2 L726.8 653.2 L720.1 657.3 L713.2 661.2 L706.0 664.8 L698.7 667.3 L691.4 669.4 L684.2 671.3 L677.1 672.9 L670.1 674.4 L663.0 675.7 L655.9 676.6 L648.8 677.4 L641.8 678.0 L634.8 678.4 L627.9 678.7 L621.0 678.9 L614.0 678.9 L606.9 678.7 L599.9 678.3 L593.0 677.9 L586.4 677.4 L580.2 677.0 L574.3 676.2 L568.7 675.4 L563.5 674.5 L558.3 673.7 L553.2 672.8 L548.0 672.0" stroke="#d0f878" stroke-width="2" opacity="0.7" fill="none" stroke-linecap="round"/>
</g>
<path d="M887.9 522.0 L884.5 525.3 L881.3 528.3 L878.1 531.3 L874.6 534.7 L870.7 539.0 L866.0 544.5 L860.4 551.6 L854.1 560.2 L847.3 569.5 L840.3 579.1 L833.6 588.2 L827.4 596.3 L821.5 603.4 L815.8 610.0 L810.2 616.3 L804.8 622.2 L799.6 628.0 L794.6 633.6 L789.7 638.9 L785.0 644.0 L780.6 648.8 L776.3 653.3 L772.1 657.6 L768.0 661.5 L764.0 665.1 L760.0 668.4 L756.0 671.6 L752.0 674.7 L747.9 677.9 L743.8 681.2 L760.2 698.8 L763.7 694.9 L767.1 691.2 L770.7 687.4 L774.4 683.4 L778.1 679.1 L782.0 674.5 L785.8 669.6 L789.6 664.6 L793.4 659.3 L797.3 653.9 L801.3 648.3 L805.4 642.4 L809.9 636.4 L814.5 630.1 L819.3 623.6 L824.2 616.7 L829.4 609.4 L834.6 601.7 L840.4 593.0 L846.6 583.4 L853.0 573.5 L859.2 563.7 L865.0 554.9 L870.0 547.5 L874.2 541.9 L877.7 537.5 L880.9 534.0 L883.9 530.8 L886.9 527.6 L890.1 524.0Z" fill="url(#rib2)" opacity=".4"/>
<path d="M887.9 522.0 L884.5 525.3 L881.3 528.3 L878.1 531.3 L874.6 534.7 L870.7 539.0 L866.0 544.5 L860.4 551.6 L854.1 560.2 L847.3 569.5 L840.3 579.1 L833.6 588.2 L827.4 596.3 L821.5 603.4 L815.8 610.0 L810.2 616.3 L804.8 622.2 L799.6 628.0 L794.6 633.6 L789.7 638.9 L785.0 644.0 L780.6 648.8 L776.3 653.3 L772.1 657.6 L768.0 661.5 L764.0 665.1 L760.0 668.4 L756.0 671.6 L752.0 674.7 L747.9 677.9 L743.8 681.2" stroke="#b0f070" stroke-width="2" opacity="0.45" fill="none" stroke-linecap="round"/>
<path d="M888.5 522.5 L885.1 525.9 L882.0 528.9 L878.8 531.9 L875.4 535.4 L871.6 539.7 L867.0 545.2 L861.6 552.5 L855.4 561.1 L848.7 570.5 L841.9 580.2 L835.3 589.4 L829.2 597.7 L823.4 604.9 L817.9 611.7 L812.5 618.1 L807.3 624.2 L802.2 630.1 L797.3 635.8 L792.6 641.3 L788.1 646.5 L783.8 651.4 L779.6 656.1 L775.6 660.6 L771.5 664.8 L767.5 668.6 L763.6 672.2 L759.7 675.5 L755.8 678.8 L751.9 682.2 L747.9 685.6" stroke="#d8ffa0" stroke-width="1.6" opacity="0.55" fill="none" stroke-linecap="round"/>
<path d="M889.0 523.0 L885.7 526.5 L882.6 529.6 L879.5 532.6 L876.2 536.1 L872.4 540.4 L868.0 546.0 L862.7 553.3 L856.6 562.0 L850.1 571.5 L843.5 581.3 L837.0 590.6 L831.0 599.0 L825.4 606.4 L820.0 613.4 L814.8 619.9 L809.7 626.2 L804.8 632.2 L800.0 638.0 L795.5 643.6 L791.1 649.0 L787.0 654.1 L783.0 658.9 L779.0 663.6 L775.0 668.0 L771.1 672.1 L767.2 675.9 L763.4 679.5 L759.6 683.0 L755.8 686.4 L752.0 690.0" stroke="#b8f078" stroke-width="1.8" opacity="0.55" fill="none" stroke-linecap="round"/>
<path d="M889.5 523.5 L886.3 527.1 L883.2 530.2 L880.2 533.3 L877.0 536.8 L873.3 541.2 L869.0 546.8 L863.8 554.1 L857.9 562.8 L851.6 572.5 L845.1 582.3 L838.7 591.8 L832.8 600.3 L827.4 607.9 L822.1 615.0 L817.0 621.8 L812.1 628.2 L807.3 634.3 L802.7 640.2 L798.4 646.0 L794.2 651.4 L790.2 656.7 L786.3 661.7 L782.4 666.6 L778.5 671.2 L774.6 675.6 L770.8 679.7 L767.0 683.5 L763.4 687.1 L759.7 690.7 L756.1 694.4" stroke="#98e068" stroke-width="1.8" opacity="0.45" fill="none" stroke-linecap="round"/>
<path d="M890.1 524.0 L886.9 527.6 L883.9 530.8 L880.9 534.0 L877.7 537.5 L874.2 541.9 L870.0 547.5 L865.0 554.9 L859.2 563.7 L853.0 573.5 L846.6 583.4 L840.4 593.0 L834.6 601.7 L829.4 609.4 L824.2 616.7 L819.3 623.6 L814.5 630.1 L809.9 636.4 L805.4 642.4 L801.3 648.3 L797.3 653.9 L793.4 659.3 L789.6 664.6 L785.8 669.6 L782.0 674.5 L778.1 679.1 L774.4 683.4 L770.7 687.4 L767.1 691.2 L763.7 694.9 L760.2 698.8" stroke="#4a90c8" stroke-width="1.3" opacity="0.6" fill="none" stroke-linecap="round"/>

</g>
<path d="M862 549Q867 536 875 525L893 519Q882 529 869 549Z" fill="#98e870" opacity=".95"/>
<!-- haze -->
<path d="M885 530L955 455" stroke="#7ac8c8" stroke-width="18" opacity=".16" filter="url(#fb4)"/>
<path d="M900 515L968 450" stroke="#a0c070" stroke-width="3" opacity=".22" filter="url(#fb2)"/>
</svg>
</div>
<style>
#sm{position:absolute;left:0;top:204px;width:406px;height:533px;border:1px solid #050505;border-bottom:none;border-radius:5px 5px 0 0;
 background:linear-gradient(#626262 0px,#5c5c5c 21px,#4a4a4a 81px,#393939 111px,#2a2a2a 181px,#262626 211px,#171717 321px,#121212 351px,#050505 446px,#030303 533px);overflow:hidden}
#sm:before{content:"";position:absolute;left:0;top:0;right:0;bottom:0;border-radius:4px 4px 0 0;border:1px solid rgba(255,255,255,.4);border-bottom:1px solid rgba(255,255,255,.5)}
#left{position:absolute;left:7px;top:7px;width:254px;height:489px;background:#fff;border:1px solid #7d7d7d;border-radius:3px}
.t12{font-size:12px;white-space:nowrap;position:absolute;line-height:14px}
.lt{color:#1e395b}
.rt{color:#f4f4f4;left:275px}
.sep{position:absolute;left:270px;width:128px;height:2px;border-top:1px solid #2c2c2c;border-bottom:1px solid #4a4a4a;opacity:.9}
</style>
<div id="sm">
 <div id="left"></div>
</div>
<!-- left panel contents (absolute page coords) -->
<div class="t12 lt" style="left:23px;top:220px">Programs</div>
<div class="abs" style="left:78px;top:226px;width:170px;height:1px;background:linear-gradient(90deg,#c8d0dc,#dfe5ec 80%,#eef2f6)"></div>
<div class="abs" style="left:15px;top:238px;width:243px;height:19px;border:1px solid #a9cfe8;border-radius:3px;background:linear-gradient(#eef6fc,#d9ebf8)"></div>
<svg class="abs" style="left:19px;top:239px" width="17" height="17" viewBox="0 0 17 17">
 <rect x="1.5" y="1.5" width="12" height="14" fill="#fbfbf6" stroke="#8c7a52" stroke-width="1"/>
 <rect x="13" y="4" width="2" height="11" fill="#c9a84a"/>
 <path d="M3 5h4M3 8h9M3 10.5h4M8 10.5h4M3 13h9" stroke="#4a6a9a" stroke-width="1"/>
</svg>
<div class="t12" style="left:37px;top:241px;color:#000">WordPad</div>

<svg class="abs" style="left:15px;top:655px" width="17" height="17" viewBox="0 0 17 17">
 <circle cx="10" cy="6" r="4.8" fill="#e6f2f6" stroke="#8fa6b0" stroke-width="1.3"/>
 <path d="M6.6 9.4L2.2 13.8" stroke="#8f9a9e" stroke-width="2.4" stroke-linecap="round"/>
</svg>
<div class="t12" style="left:35px;top:657px;color:#1f2f5f;letter-spacing:-0.35px">Search Everywhere</div>
<svg class="abs" style="left:15px;top:677px" width="17" height="17" viewBox="0 0 17 17">
 <circle cx="10" cy="6" r="4.8" fill="#e6f2f6" stroke="#8fa6b0" stroke-width="1.3"/>
 <path d="M6.6 9.4L2.2 13.8" stroke="#8f9a9e" stroke-width="2.4" stroke-linecap="round"/>
</svg>
<div class="t12" style="left:35px;top:679px;color:#1f2f5f;letter-spacing:-0.25px">Search the Internet</div>

<!-- search box -->
<div class="abs" style="left:8px;top:708px;width:252px;height:22px;background:#fff;border:1px solid #5a5a5a;border-top-color:#3a3a3a"></div>
<div class="t12" style="left:14px;top:714px;color:#111">word</div>
<div class="abs" style="left:41px;top:713px;width:1px;height:13px;background:#000"></div>
<svg class="abs" style="left:243px;top:715px" width="10" height="9" viewBox="0 0 10 9"><path d="M1.5 1L8.5 8M8.5 1L1.5 8" stroke="#3b6a86" stroke-width="1.8"/></svg>

<!-- user picture -->
<div class="abs" style="left:305px;top:211px;width:56px;height:56px;border-radius:5px;background:linear-gradient(#f2f2f2,#b9c4c6 50%,#8fa3a6);box-shadow:0 1px 2px rgba(0,0,0,.6)"></div>
<div class="abs" style="left:309px;top:215px;width:49px;height:48px;overflow:hidden;border:1px solid #5a4a3a">
 <svg width="49" height="48" viewBox="0 0 49 48">
  <defs>
   <radialGradient id="flc" cx="0.5" cy="0.5" r="0.5"><stop offset="0" stop-color="#b8a830"/><stop offset=".45" stop-color="#d8c038"/><stop offset=".8" stop-color="#e8b030" stop-opacity=".8"/><stop offset="1" stop-color="#f09030" stop-opacity="0"/></radialGradient>
   <linearGradient id="flTop" x1="0" y1="0" x2="0" y2="1"><stop offset="0" stop-color="#fcd8c0" stop-opacity=".95"/><stop offset=".45" stop-color="#f8b080" stop-opacity=".35"/><stop offset=".6" stop-color="#f59a5a" stop-opacity="0"/></linearGradient>
   <filter id="flb"><feGaussianBlur stdDeviation=".6"/></filter>
  </defs>
  <g filter="url(#flb)"><path d="M24 24L69.0 24.0L67.2 36.7Z" fill="#f37a1e"/><path d="M24 24L67.2 36.7L61.9 48.3Z" fill="#f89a38"/><path d="M24 24L61.9 48.3L53.5 58.0Z" fill="#f37a1e"/><path d="M24 24L53.5 58.0L42.7 64.9Z" fill="#f89a38"/><path d="M24 24L42.7 64.9L30.4 68.5Z" fill="#f37a1e"/><path d="M24 24L30.4 68.5L17.6 68.5Z" fill="#f89a38"/><path d="M24 24L17.6 68.5L5.3 64.9Z" fill="#f37a1e"/><path d="M24 24L5.3 64.9L-5.5 58.0Z" fill="#f89a38"/><path d="M24 24L-5.5 58.0L-13.9 48.3Z" fill="#f37a1e"/><path d="M24 24L-13.9 48.3L-19.2 36.7Z" fill="#f89a38"/><path d="M24 24L-19.2 36.7L-21.0 24.0Z" fill="#f37a1e"/><path d="M24 24L-21.0 24.0L-19.2 11.3Z" fill="#f89a38"/><path d="M24 24L-19.2 11.3L-13.9 -0.3Z" fill="#f37a1e"/><path d="M24 24L-13.9 -0.3L-5.5 -10.0Z" fill="#f89a38"/><path d="M24 24L-5.5 -10.0L5.3 -16.9Z" fill="#f37a1e"/><path d="M24 24L5.3 -16.9L17.6 -20.5Z" fill="#f89a38"/><path d="M24 24L17.6 -20.5L30.4 -20.5Z" fill="#f37a1e"/><path d="M24 24L30.4 -20.5L42.7 -16.9Z" fill="#f89a38"/><path d="M24 24L42.7 -16.9L53.5 -10.0Z" fill="#f37a1e"/><path d="M24 24L53.5 -10.0L61.9 -0.3Z" fill="#f89a38"/><path d="M24 24L61.9 -0.3L67.2 11.3Z" fill="#f37a1e"/><path d="M24 24L67.2 11.3L69.0 24.0Z" fill="#f89a38"/>
  <g stroke="#b83a08" stroke-width="1.1" opacity=".75"><path d="M32.0 24.4L68.9 26.4"/><path d="M31.5 26.7L66.5 38.9"/><path d="M30.5 28.7L60.5 50.3"/><path d="M28.9 30.3L51.6 59.5"/><path d="M26.9 31.4L40.5 65.9"/><path d="M24.7 32.0L28.1 68.8"/><path d="M22.4 31.8L15.3 68.1"/><path d="M20.3 31.1L3.2 63.9"/><path d="M18.5 29.8L-7.2 56.4"/><path d="M17.1 28.0L-15.1 46.3"/><path d="M16.2 25.8L-19.8 34.4"/><path d="M16.0 23.6L-20.9 21.6"/><path d="M16.5 21.3L-18.5 9.1"/><path d="M17.5 19.3L-12.5 -2.3"/><path d="M19.1 17.7L-3.6 -11.5"/><path d="M21.1 16.6L7.5 -17.9"/><path d="M23.3 16.0L19.9 -20.8"/><path d="M25.6 16.2L32.7 -20.1"/><path d="M27.7 16.9L44.8 -15.9"/><path d="M29.5 18.2L55.2 -8.4"/><path d="M30.9 20.0L63.1 1.7"/><path d="M31.8 22.2L67.8 13.6"/></g></g>
  <circle cx="24" cy="24" r="11" fill="url(#flc)"/>
  <rect width="49" height="48" fill="url(#flTop)"/>
 </svg>
</div>

<div class="t12 rt" style="top:289px">admin</div>
<div class="t12 rt" style="top:324px">Documents</div>
<div class="t12 rt" style="top:359px">Pictures</div>
<div class="t12 rt" style="top:394px">Music</div>
<div class="t12 rt" style="top:429px">Games</div>
<div class="sep" style="top:454px"></div>
<div class="t12 rt" style="top:467px">Recent Items</div>
<svg class="abs" style="left:386px;top:468px" width="8" height="10" viewBox="0 0 8 10"><path d="M1.5 1.5L6 5L1.5 8.5Z" fill="#f4f4f4"/></svg>
<div class="t12 rt" style="top:502px">Computer</div>
<div class="t12 rt" style="top:537px">Network</div>
<div class="t12 rt" style="top:572px">Connect To</div>
<div class="sep" style="top:597px"></div>
<div class="t12 rt" style="top:610px">Control Panel</div>
<div class="t12 rt" style="top:645px">Default Programs</div>
<div class="t12 rt" style="top:680px">Help and Support</div>

<!-- power / lock / arrow -->
<div class="abs" style="left:266px;top:707px;width:129px;height:24px;border-radius:4px;border:1px solid #6a6260;background:#1a1a1a"></div>
<div class="abs" style="left:268px;top:709px;width:50px;height:20px;border-radius:2px 0 0 2px;background:linear-gradient(#8a5a5a,#6a3a3a 50%,#3a0404 50%,#2a0202);box-shadow:inset 0 0 0 1px rgba(255,255,255,.12)"></div>
<div class="abs" style="left:319px;top:709px;width:51px;height:20px;background:linear-gradient(#7a7a7a,#505050 50%,#141414 50%,#0c0c0c);box-shadow:inset 0 0 0 1px rgba(255,255,255,.1)"></div>
<div class="abs" style="left:371px;top:709px;width:22px;height:20px;border-radius:0 2px 2px 0;background:linear-gradient(#7a7a7a,#505050 50%,#141414 50%,#0c0c0c);box-shadow:inset 0 0 0 1px rgba(255,255,255,.1)"></div>
<svg class="abs" style="left:285px;top:711px" width="17" height="17" viewBox="0 0 17 17"><circle cx="8.5" cy="8" r="5.6" fill="none" stroke="#fff" stroke-width="2"/><path d="M8.5 4.5V9" stroke="#fff" stroke-width="2"/></svg>
<svg class="abs" style="left:338px;top:711px" width="17" height="17" viewBox="0 0 17 17"><path d="M5 8V5.5a3.5 3.5 0 0 1 7 0V8" fill="none" stroke="#fff" stroke-width="2"/><rect x="3" y="7.5" width="11" height="8" rx="1" fill="#fff"/></svg>
<svg class="abs" style="left:377px;top:713px" width="10" height="12" viewBox="0 0 10 12"><path d="M2.5 1.5L7.5 6L2.5 10.5Z" fill="#fff"/></svg>

<!-- taskbar -->
<div class="abs" style="left:0;top:737px;width:1024px;height:31px;background:linear-gradient(#060606 0px,#060606 2px,#c2c4c4 2px,#a8aaaa 3px,#8e9090 5px,#6c6e6e 11px,#555758 15px,#1c1d1f 15px,#1a1b1d 31px)"></div>
<!-- start orb -->
<svg class="abs" style="left:6px;top:731px" width="48" height="37" viewBox="0 0 48 37">
 <defs>
  <radialGradient id="orb" cx="0.5" cy="0.45" r="0.6"><stop offset="0" stop-color="#2a5a78"/><stop offset="0.7" stop-color="#123048"/><stop offset="1" stop-color="#0a1a28"/></radialGradient>
  <radialGradient id="orbGlow" cx="0.5" cy="1" r="0.55"><stop offset="0" stop-color="#40b0e0" stop-opacity=".9"/><stop offset="1" stop-color="#40b0e0" stop-opacity="0"/></radialGradient>
  <linearGradient id="orbHi" x1="0" y1="0" x2="0" y2="1"><stop offset="0" stop-color="#f0f4f8" stop-opacity=".75"/><stop offset="1" stop-color="#c0d0e0" stop-opacity="0"/></linearGradient>
 </defs>
 <circle cx="24" cy="24" r="21.5" fill="#081018"/>
 <circle cx="24" cy="24" r="20.5" fill="url(#orb)" stroke="#6a9ab0" stroke-width="1" stroke-opacity=".8"/>
 <circle cx="24" cy="24" r="20" fill="url(#orbGlow)"/>
 <g transform="translate(24 25) scale(1.22)">
  <path d="M-9 -8.5 Q-5 -10.5 -0.8 -8.2 L-2.2 -0.8 Q-6.2 -3 -10.6 -1.2Z" fill="#f0602a"/>
  <path d="M0.6 -7.8 Q4.6 -5.6 9.4 -7.2 L8 0 Q3.8 1.8 -0.8 -0.4Z" fill="#8ac83a"/>
  <path d="M-10.9 0.4 Q-6.8 -1.4 -2.6 0.8 L-4 8 Q-8 5.8 -12.4 7.5Z" fill="#3aa2e8"/>
  <path d="M-1.2 1.4 Q3 3.6 7.6 2 L6.2 9.2 Q2 11 -2.6 8.6Z" fill="#f8c830"/>
 </g>
 <ellipse cx="24" cy="13" rx="15" ry="9.5" fill="url(#orbHi)"/>
</svg>
<!-- cursor -->
<svg class="abs" style="left:0;top:754px" width="12" height="14" viewBox="0 0 12 14"><path d="M0.5 0.5L0.5 14L3.5 11L6 14L9 14L6 10L10.5 10Z" fill="#fff" stroke="#000" stroke-width="1"/></svg>
<!-- quick launch -->
<svg class="abs" style="left:64px;top:746px" width="18" height="15" viewBox="0 0 18 15"><rect x="0.5" y="0.5" width="17" height="14" fill="#dfe8f0" /><rect x="2" y="2" width="14" height="11" fill="#3a6ac0"/><rect x="2" y="2" width="14" height="5" fill="#5a8ad8" opacity=".6"/><rect x="2" y="11" width="14" height="2" fill="#1a2a5a"/></svg>
<svg class="abs" style="left:87px;top:746px" width="18" height="15" viewBox="0 0 18 15"><rect x="0.5" y="0.5" width="17" height="14" fill="#e8eef4"/><rect x="2" y="2" width="14" height="11" fill="#1a4a9a"/><rect x="4" y="4" width="7" height="4" fill="#e0e8f0"/><rect x="7" y="7" width="7" height="4" fill="#f0f4f8" stroke="#2a5aa0" stroke-width=".6"/></svg>
<svg class="abs" style="left:110px;top:744px" width="19" height="18" viewBox="0 0 19 18"><path d="M15.2 11.5A6 6 0 1 1 15.4 8H6.2" fill="none" stroke="#2a86e0" stroke-width="3.2"/><path d="M5.8 9.6H15.6" stroke="#2a86e0" stroke-width="2.2"/><path d="M2 16.5Q0 13 7 7Q14 1.5 16.8 2.2Q18.5 3 15.5 6.5" fill="none" stroke="#e8b028" stroke-width="1.4"/></svg>
<!-- task button -->
<div class="abs" style="left:162px;top:740px;width:156px;height:26px;border-radius:3px;border:1px solid #2a2a2a;box-shadow:inset 0 0 0 1px rgba(255,255,255,.25);background:linear-gradient(rgba(255,255,255,.18),rgba(255,255,255,.06) 48%,rgba(0,0,0,.1) 52%,rgba(255,255,255,.03))"></div>
<svg class="abs" style="left:169px;top:745px" width="18" height="17" viewBox="0 0 18 17"><rect x="1" y="0.5" width="16" height="12" fill="#d8e0e8" stroke="#7a8a9a" stroke-width="1"/><rect x="2.5" y="2" width="13" height="9" fill="#2a7a3a"/><path d="M2.5 2h13v4L2.5 11Z" fill="#3a7ad8"/><path d="M5 10L14 3" stroke="#e04ab0" stroke-width="1.6"/><path d="M6 13.5h6v1.5h2.5v1.5h-11v-1.5H6Z" fill="#c8d0d8"/></svg>
<div class="t12" style="left:190px;top:746px;color:#fff">Personalization</div>
<!-- tray -->
<svg class="abs" style="left:857px;top:743px" width="16" height="17" viewBox="0 0 16 17"><path d="M8 1L14 3.5V8.5Q14 13.5 8 16Q2 13.5 2 8.5V3.5Z" fill="#e8a030" stroke="#8a5a20" stroke-width=".8"/><path d="M8 4.5V10" stroke="#3a1a00" stroke-width="2"/><circle cx="8" cy="12.5" r="1.1" fill="#3a1a00"/></svg>
<svg class="abs" style="left:875px;top:743px" width="17" height="17" viewBox="0 0 17 17"><rect x="3" y="1" width="6" height="13" fill="#9aa0b0" stroke="#5a6070" stroke-width=".8"/><rect x="4" y="2" width="4" height="3" fill="#d8dce8"/><circle cx="11.5" cy="11.5" r="5" fill="#2a9a2a"/><path d="M9 11.5L11 13.5L14.5 9" fill="none" stroke="#fff" stroke-width="1.5"/></svg>
<svg class="abs" style="left:892px;top:742px" width="18" height="18" viewBox="0 0 18 18"><rect x="1" y="5" width="11" height="11" fill="#2a8aa0" stroke="#d0e0e8" stroke-width="1"/><rect x="3" y="7" width="7" height="3" fill="#7ad0e0"/><rect x="11" y="1" width="6" height="6" fill="#f0e060" stroke="#a09030" stroke-width=".8"/><rect x="11" y="9" width="6" height="7" fill="#e0a080" stroke="#d0e0e8" stroke-width=".8"/><rect x="4" y="11" width="5" height="3" fill="#5ab05a"/></svg>
<svg class="abs" style="left:920px;top:742px" width="18" height="18" viewBox="0 0 18 18"><rect x="5" y="1" width="12" height="9" fill="#2a5ab0" stroke="#e8f0f8" stroke-width="1.2"/><rect x="1" y="5" width="12" height="9" fill="#2a6ad0" stroke="#e8f0f8" stroke-width="1.2"/><path d="M5 16h4" stroke="#e8f0f8" stroke-width="1.5"/><circle cx="12" cy="13" r="4" fill="#2ab0c0"/><circle cx="12" cy="13" r="4" fill="none" stroke="#1a8a4a" stroke-width=".8"/></svg>
<svg class="abs" style="left:939px;top:742px" width="17" height="18" viewBox="0 0 17 18"><path d="M1.5 6.5h3L9 2.5v13L4.5 11.5h-3Z" fill="#e8ecf0" stroke="#8a9098" stroke-width=".6"/><path d="M11 6.5Q12.5 9 11 11.5M13 5Q15.5 9 13 13" fill="none" stroke="#e8ecf0" stroke-width="1.2"/></svg>
<div class="abs" style="left:961px;top:746px;font-size:12.5px;color:#fff;white-space:nowrap;line-height:15px">11:17 AM</div>
<!-- recycle bin -->
<svg class="abs" style="left:19px;top:3px" width="40" height="48" viewBox="0 0 40 48">
 <defs>
  <linearGradient id="binG" x1="0" y1="0" x2="1" y2="0"><stop offset="0" stop-color="#a8c8c8" stop-opacity=".85"/><stop offset=".3" stop-color="#7aa8b0" stop-opacity=".6"/><stop offset=".7" stop-color="#6a98a8" stop-opacity=".55"/><stop offset="1" stop-color="#b8d8d8" stop-opacity=".85"/></linearGradient>
 </defs>
 <path d="M3 5L8 42Q20 47 32 42L37 5Z" fill="url(#binG)" stroke="#c8e0e0" stroke-width="1"/>
 <ellipse cx="20" cy="5.5" rx="17" ry="3.6" fill="#5a8a90" stroke="#d8e8e8" stroke-width="1.5"/>
 <path d="M12 18Q16 28 22 34L16 34Q12 28 10 20Z" fill="#3a78d0" opacity=".85"/>
 <ellipse cx="20" cy="38" rx="11" ry="4.5" fill="#e0e8ec" opacity=".9"/>
 <ellipse cx="20" cy="43" rx="12" ry="2.5" fill="#c8d0d4" stroke="#8a9aa0" stroke-width=".6"/>
</svg>
<div class="abs" style="left:0;top:54px;width:78px;text-align:center;font-size:12px;color:#fff;line-height:14px;text-shadow:0 0 2px #000,1px 1px 1px #000">Recycle Bin</div>

<!-- gadget toolbar -->
<div class="abs" style="left:934px;top:10px;width:79px;height:21px;border-radius:11px;border:1px solid rgba(170,200,205,.6);background:rgba(22,32,58,.7)"></div>
<div class="abs" style="left:965px;top:12px;width:1px;height:17px;background:rgba(190,215,225,.45)"></div>
<svg class="abs" style="left:943px;top:15px" width="12" height="12" viewBox="0 0 12 12"><path d="M6 2V10M2 6H10" stroke="#d0dce2" stroke-width="2"/></svg>
<svg class="abs" style="left:973px;top:16px" width="10" height="10" viewBox="0 0 10 10"><path d="M7.5 1.5L2.5 5L7.5 8.5Z" fill="#485a6a"/></svg>
<svg class="abs" style="left:993px;top:16px" width="10" height="10" viewBox="0 0 10 10"><path d="M2.5 1.5L7.5 5L2.5 8.5Z" fill="#485a6a"/></svg>

<!-- clock gadget -->
<svg class="abs" style="left:886px;top:47px" width="128" height="128" viewBox="0 0 128 128">
 <defs>
  <radialGradient id="rim" cx=".5" cy=".45" r=".55"><stop offset=".85" stop-color="#3a3432"/><stop offset=".95" stop-color="#2a2624"/><stop offset="1" stop-color="#141212"/></radialGradient>
  <radialGradient id="face" cx=".45" cy=".4" r=".7"><stop offset="0" stop-color="#f8f6ee"/><stop offset=".8" stop-color="#efeee4"/><stop offset="1" stop-color="#dcdacc"/></radialGradient>
 </defs>
 <circle cx="63.5" cy="64" r="62" fill="rgba(0,0,0,.3)"/>
 <circle cx="63" cy="63" r="61" fill="url(#rim)"/>
 <circle cx="63" cy="63" r="54" fill="url(#face)"/>
 <circle cx="63" cy="63" r="54" fill="none" stroke="#1a1616" stroke-width="1"/>
 <path d="M63.0 16.0L63.0 10.0" stroke="#222" stroke-width="1.6"/><circle cx="68.3" cy="12.8" r=".75" fill="#555"/><circle cx="73.5" cy="13.6" r=".75" fill="#555"/><circle cx="78.6" cy="15.0" r=".75" fill="#555"/><circle cx="83.5" cy="16.9" r=".75" fill="#555"/><path d="M86.5 22.3L89.5 17.1" stroke="#222" stroke-width="1.6"/><circle cx="92.7" cy="22.1" r=".75" fill="#555"/><circle cx="96.8" cy="25.5" r=".75" fill="#555"/><circle cx="100.5" cy="29.2" r=".75" fill="#555"/><circle cx="103.9" cy="33.3" r=".75" fill="#555"/><path d="M103.7 39.5L108.9 36.5" stroke="#222" stroke-width="1.6"/><circle cx="109.1" cy="42.5" r=".75" fill="#555"/><circle cx="111.0" cy="47.4" r=".75" fill="#555"/><circle cx="112.4" cy="52.5" r=".75" fill="#555"/><circle cx="113.2" cy="57.7" r=".75" fill="#555"/><path d="M110.0 63.0L116.0 63.0" stroke="#222" stroke-width="1.6"/><circle cx="113.2" cy="68.3" r=".75" fill="#555"/><circle cx="112.4" cy="73.5" r=".75" fill="#555"/><circle cx="111.0" cy="78.6" r=".75" fill="#555"/><circle cx="109.1" cy="83.5" r=".75" fill="#555"/><path d="M103.7 86.5L108.9 89.5" stroke="#222" stroke-width="1.6"/><circle cx="103.9" cy="92.7" r=".75" fill="#555"/><circle cx="100.5" cy="96.8" r=".75" fill="#555"/><circle cx="96.8" cy="100.5" r=".75" fill="#555"/><circle cx="92.7" cy="103.9" r=".75" fill="#555"/><path d="M86.5 103.7L89.5 108.9" stroke="#222" stroke-width="1.6"/><circle cx="83.5" cy="109.1" r=".75" fill="#555"/><circle cx="78.6" cy="111.0" r=".75" fill="#555"/><circle cx="73.5" cy="112.4" r=".75" fill="#555"/><circle cx="68.3" cy="113.2" r=".75" fill="#555"/><path d="M63.0 110.0L63.0 116.0" stroke="#222" stroke-width="1.6"/><circle cx="57.7" cy="113.2" r=".75" fill="#555"/><circle cx="52.5" cy="112.4" r=".75" fill="#555"/><circle cx="47.4" cy="111.0" r=".75" fill="#555"/><circle cx="42.5" cy="109.1" r=".75" fill="#555"/><path d="M39.5 103.7L36.5 108.9" stroke="#222" stroke-width="1.6"/><circle cx="33.3" cy="103.9" r=".75" fill="#555"/><circle cx="29.2" cy="100.5" r=".75" fill="#555"/><circle cx="25.5" cy="96.8" r=".75" fill="#555"/><circle cx="22.1" cy="92.7" r=".75" fill="#555"/><path d="M22.3 86.5L17.1 89.5" stroke="#222" stroke-width="1.6"/><circle cx="16.9" cy="83.5" r=".75" fill="#555"/><circle cx="15.0" cy="78.6" r=".75" fill="#555"/><circle cx="13.6" cy="73.5" r=".75" fill="#555"/><circle cx="12.8" cy="68.3" r=".75" fill="#555"/><path d="M16.0 63.0L10.0 63.0" stroke="#222" stroke-width="1.6"/><circle cx="12.8" cy="57.7" r=".75" fill="#555"/><circle cx="13.6" cy="52.5" r=".75" fill="#555"/><circle cx="15.0" cy="47.4" r=".75" fill="#555"/><circle cx="16.9" cy="42.5" r=".75" fill="#555"/><path d="M22.3 39.5L17.1 36.5" stroke="#222" stroke-width="1.6"/><circle cx="22.1" cy="33.3" r=".75" fill="#555"/><circle cx="25.5" cy="29.2" r=".75" fill="#555"/><circle cx="29.2" cy="25.5" r=".75" fill="#555"/><circle cx="33.3" cy="22.1" r=".75" fill="#555"/><path d="M39.5 22.3L36.5 17.1" stroke="#222" stroke-width="1.6"/><circle cx="42.5" cy="16.9" r=".75" fill="#555"/><circle cx="47.4" cy="15.0" r=".75" fill="#555"/><circle cx="52.5" cy="13.6" r=".75" fill="#555"/><circle cx="57.7" cy="12.8" r=".75" fill="#555"/>
 <g font-family="Liberation Sans" font-size="15.5" font-weight="bold" fill="#4a4846" text-anchor="middle"><text x="63.2" y="28.2" transform="translate(63.2 0) scale(.72 1) translate(-63.2 0)">12</text><text x="83.8" y="34.0" transform="translate(83.8 0) scale(.72 1) translate(-83.8 0)">1</text><text x="98.4" y="46.9" transform="translate(98.4 0) scale(.72 1) translate(-98.4 0)">2</text><text x="106" y="67.8" transform="translate(106 0) scale(.72 1) translate(-106 0)">3</text><text x="98.8" y="86.8" transform="translate(98.8 0) scale(.72 1) translate(-98.8 0)">4</text><text x="83" y="103.2" transform="translate(83 0) scale(.72 1) translate(-83 0)">5</text><text x="62.5" y="107.8" transform="translate(62.5 0) scale(.72 1) translate(-62.5 0)">6</text><text x="43.2" y="104.4" transform="translate(43.2 0) scale(.72 1) translate(-43.2 0)">7</text><text x="25.7" y="88.0" transform="translate(25.7 0) scale(.72 1) translate(-25.7 0)">8</text><text x="18.6" y="68.0" transform="translate(18.6 0) scale(.72 1) translate(-18.6 0)">9</text><text x="26.8" y="48.1" transform="translate(26.8 0) scale(.72 1) translate(-26.8 0)">10</text><text x="42.1" y="34.0" transform="translate(42.1 0) scale(.72 1) translate(-42.1 0)">11</text></g>
 <path d="M60.5 64L47.5 28L65.5 62Z" fill="#151515"/>
 <path d="M62 60.5L110 73.5L61.5 66Z" fill="#151515"/>
 <circle cx="63" cy="63" r="2.6" fill="#333" stroke="#999" stroke-width=".8"/>
</svg>

<!-- slideshow gadget -->
<div class="abs" style="left:887px;top:190px;width:124px;height:95px;border-radius:3px;background:linear-gradient(#5a9aa8,#3a7a88);box-shadow:0 0 2px rgba(0,0,0,.6)"></div>
<div class="abs" style="left:889px;top:192px;width:120px;height:91px;overflow:hidden">
 <svg width="120" height="91" viewBox="0 0 120 91">
  <defs>
   <linearGradient id="sky" x1="0" y1="0" x2="0" y2="1"><stop offset="0" stop-color="#1e64d8"/><stop offset=".3" stop-color="#4a92ec"/><stop offset=".5" stop-color="#8cc4f4"/><stop offset=".62" stop-color="#a8d0f4"/><stop offset=".64" stop-color="#5a88d8"/><stop offset="1" stop-color="#3a62c0"/></linearGradient>
   <radialGradient id="glow" cx=".25" cy=".55" r=".4"><stop offset="0" stop-color="#e8f4ff" stop-opacity=".8"/><stop offset="1" stop-color="#e8f4ff" stop-opacity="0"/></radialGradient>
   <filter id="cb"><feGaussianBlur stdDeviation="1"/></filter>
  </defs>
  <rect width="120" height="91" fill="url(#sky)"/>
  <rect width="120" height="91" fill="url(#glow)"/>
  <g filter="url(#cb)">
   <path d="M0 58Q4 46 12 48Q20 40 28 46Q34 32 48 36Q56 28 66 36Q74 34 80 44Q90 40 98 46Q108 42 114 46L120 48V60H0Z" fill="#4a6cc0"/>
   <path d="M36 44Q44 34 54 38Q62 32 68 40Q62 50 46 50Z" fill="#d8ecff" opacity=".85"/>
   <path d="M2 54Q10 50 20 54Q14 58 4 58Z" fill="#c8e0ff" opacity=".6"/>
   <path d="M30 24Q34 18 40 20Q46 22 44 27Q38 30 32 28Z" fill="#3a5ab8" opacity=".9"/>
   <path d="M98 40Q104 36 112 38Q116 44 104 45Z" fill="#3a58b0" opacity=".8"/>
   <path d="M0 60H120V64H0Z" fill="#d0e4ff" opacity=".55"/>
   <path d="M8 64V88M18 64V88M26 64V86" stroke="#b8ccf8" stroke-width="3" opacity=".35"/>
  </g>
  <path d="M60 91L84 58H90L118 91Z" fill="#1a2a60"/>
  <path d="M66 85H112M72 77H100M78 69H94" stroke="#c8f0e8" stroke-width="1.4" opacity=".9"/>
  <path d="M81 58Q87 52 93 58Z" fill="#1a2440"/>
 </svg>
</div>

<!-- feed gadget -->
<div class="abs" style="left:887px;top:299px;width:124px;height:168px;border:1px solid #7a8690;background:repeating-linear-gradient(45deg,rgba(255,255,255,.02) 0 1px,transparent 1px 3px),repeating-linear-gradient(-45deg,rgba(0,0,0,.1) 0 1px,transparent 1px 3px),#23273a"></div>
<div class="abs" style="left:888px;top:300px;width:122px;height:17px;background:rgba(255,255,255,.04)"></div>
<div class="abs" style="left:888px;top:436px;width:122px;height:30px;background:#1a1c26;border-top:1px solid #30343f"></div>
<div class="abs" style="left:889px;top:349px;width:124px;text-align:center;font-size:12px;line-height:14px;color:#f0f0f0;letter-spacing:.25px">The Internet Explorer<br>Feedstore is<br>unavailable.</div>

<!-- watermark -->
<div class="abs" style="left:800px;top:688px;width:218px;text-align:right;font-size:12px;line-height:16px;color:rgba(225,238,242,.6)">Windows Vista (TM)<br><span style="color:rgba(225,238,242,.32)">Build 6002</span><br><span style="color:rgba(225,238,242,.22)">C:\Windows</span></div>

</body></html>
